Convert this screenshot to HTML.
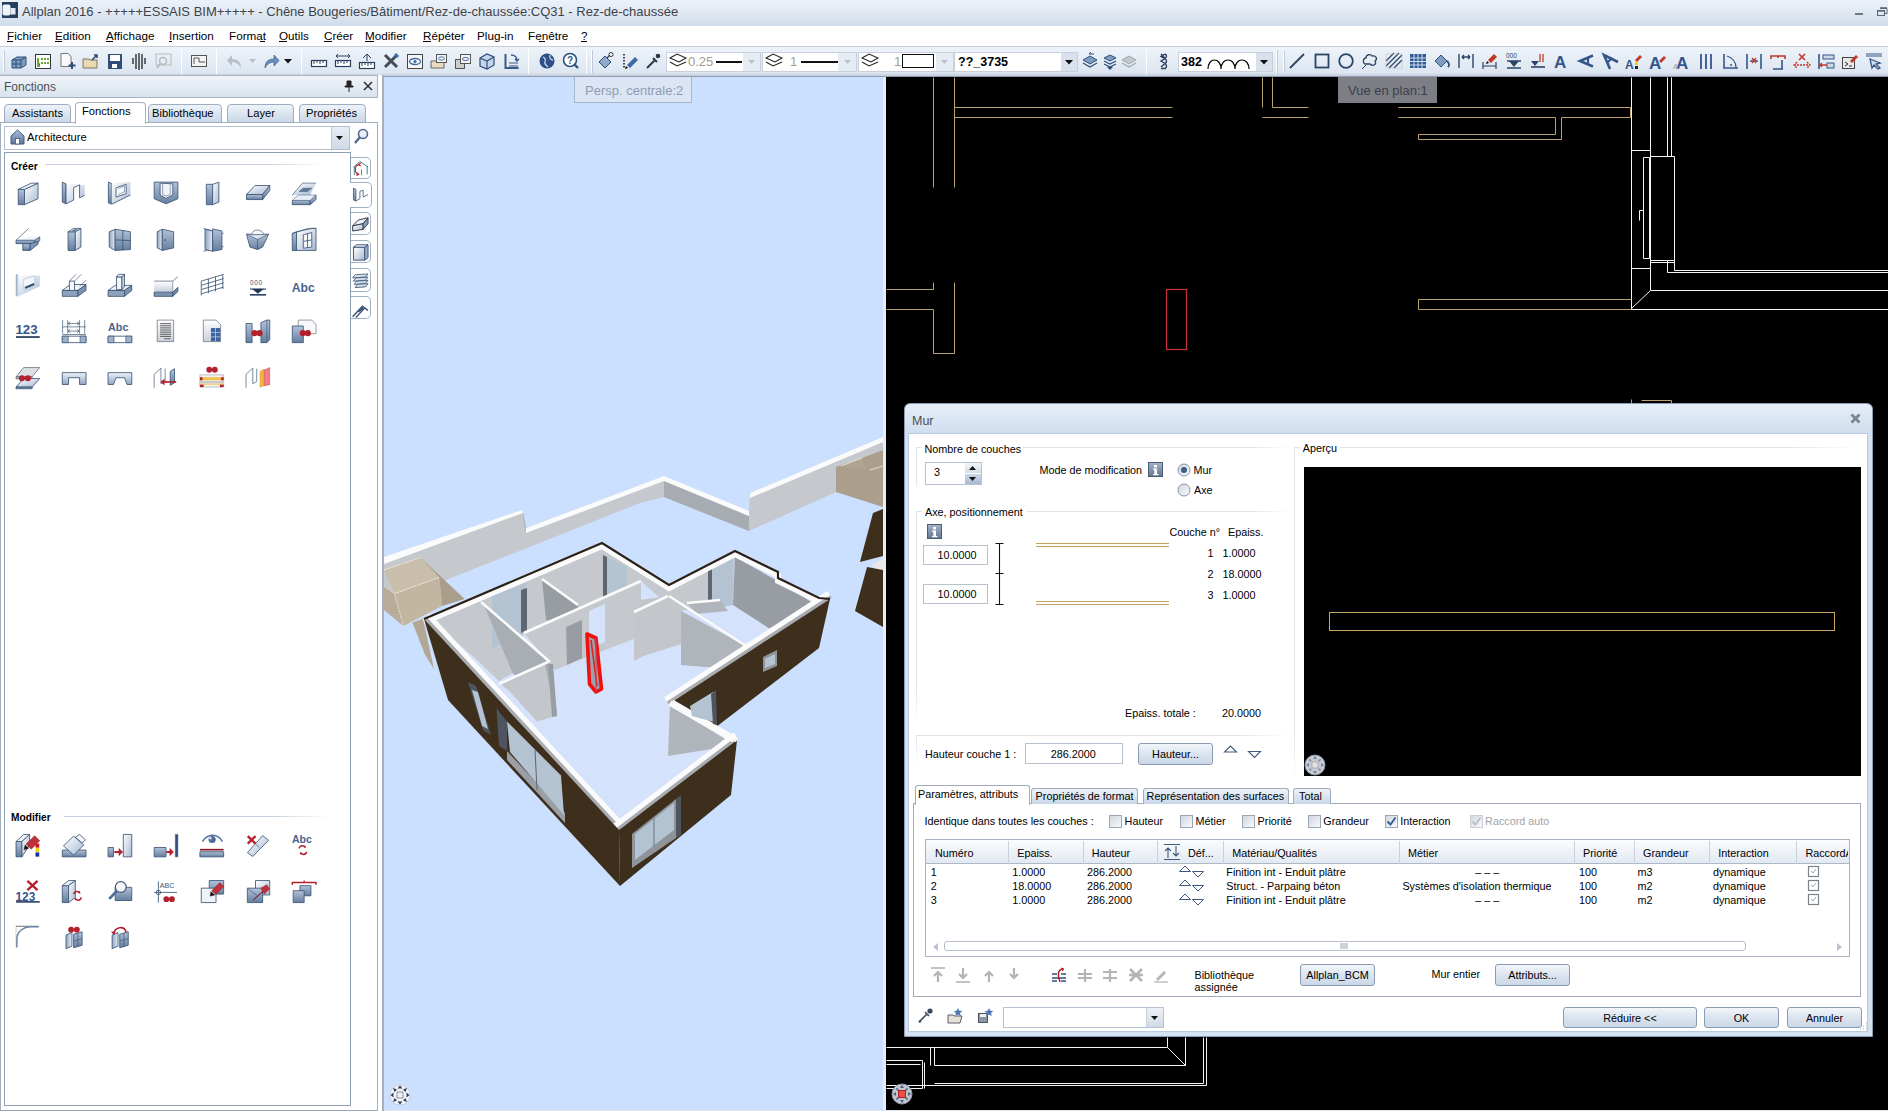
<!DOCTYPE html>
<html><head><meta charset="utf-8">
<style>
*{box-sizing:border-box;margin:0;padding:0}
html,body{width:1888px;height:1111px;overflow:hidden;background:#e3eaf3;font-family:"Liberation Sans",sans-serif;color:#000}
.a{position:absolute}
.t{position:absolute;white-space:pre;line-height:1}
svg{position:absolute;overflow:visible}

</style></head><body>
<div class="a" style="left:0;top:0;width:1888px;height:26px;background:linear-gradient(#ecf1f9,#e3eaf4 40%,#cfdcea)"></div>
<svg style="left:2px;top:2px" width="17" height="17"><rect x="0" y="0" width="16" height="16" fill="#24405f"/><rect x="0.5" y="2.5" width="8" height="11" rx="2" fill="#eef3fa"/><rect x="8.5" y="6" width="5" height="6.5" fill="#e3ebf6"/></svg>
<div class="t" style="left:22px;top:5px;font-size:13px;color:#3e434a">Allplan 2016 - +++++ESSAIS BIM+++++ - Chêne Bougeries/Bâtiment/Rez-de-chaussée:CQ31 - Rez-de-chaussée</div>
<div class="a" style="left:1855px;top:13px;width:8px;height:2px;background:#6d7885"></div>
<svg style="left:1877px;top:7px" width="11" height="9"><path d="M3 1.5h7v5H8" fill="none" stroke="#5d6876" stroke-width="1"/><path d="M3 1h7" stroke="#5d6876" stroke-width="1.6"/><rect x="0.5" y="3.5" width="7" height="5" fill="none" stroke="#5d6876"/><path d="M0.5 4h7" stroke="#5d6876" stroke-width="1.4"/></svg>
<div class="a" style="left:0;top:26px;width:1888px;height:21px;background:#fff;border-bottom:1px solid #c7ccd2"></div>
<div class="t" style="left:7px;top:30px;font-size:11.7px;color:#000">Fichier</div>
<div class="a" style="left:7px;top:41px;width:6px;height:1px;background:#000"></div>
<div class="t" style="left:55px;top:30px;font-size:11.7px;color:#000">Edition</div>
<div class="a" style="left:55px;top:41px;width:7px;height:1px;background:#000"></div>
<div class="t" style="left:106px;top:30px;font-size:11.7px;color:#000">Affichage</div>
<div class="a" style="left:106px;top:41px;width:7px;height:1px;background:#000"></div>
<div class="t" style="left:169px;top:30px;font-size:11.7px;color:#000">Insertion</div>
<div class="a" style="left:169px;top:41px;width:3px;height:1px;background:#000"></div>
<div class="t" style="left:229px;top:30px;font-size:11.7px;color:#000">Format</div>
<div class="a" style="left:260px;top:41px;width:5px;height:1px;background:#000"></div>
<div class="t" style="left:279px;top:30px;font-size:11.7px;color:#000">Outils</div>
<div class="a" style="left:279px;top:41px;width:8px;height:1px;background:#000"></div>
<div class="t" style="left:324px;top:30px;font-size:11.7px;color:#000">Créer</div>
<div class="a" style="left:324px;top:41px;width:8px;height:1px;background:#000"></div>
<div class="t" style="left:365px;top:30px;font-size:11.7px;color:#000">Modifier</div>
<div class="a" style="left:365px;top:41px;width:9px;height:1px;background:#000"></div>
<div class="t" style="left:423px;top:30px;font-size:11.7px;color:#000">Répéter</div>
<div class="a" style="left:423px;top:41px;width:8px;height:1px;background:#000"></div>
<div class="t" style="left:477px;top:30px;font-size:11.7px;color:#000">Plug-in</div>
<div class="t" style="left:528px;top:30px;font-size:11.7px;color:#000">Fenêtre</div>
<div class="a" style="left:539px;top:41px;width:6px;height:1px;background:#000"></div>
<div class="t" style="left:581px;top:30px;font-size:11.7px;color:#000">?</div>
<div class="a" style="left:581px;top:41px;width:6px;height:1px;background:#000"></div>
<div class="a" style="left:0;top:47px;width:1888px;height:30px;background:linear-gradient(#eef3f9,#dde6f1 88%,#c5cfdb);border-bottom:1px solid #8f9cb0"></div>
<div class="a" style="left:181px;top:49px;width:1px;height:25px;background:#b9c4d1;border-right:1px solid #fff"></div>
<div class="a" style="left:216px;top:49px;width:1px;height:25px;background:#b9c4d1;border-right:1px solid #fff"></div>
<div class="a" style="left:301px;top:49px;width:1px;height:25px;background:#b9c4d1;border-right:1px solid #fff"></div>
<div class="a" style="left:528px;top:49px;width:1px;height:25px;background:#b9c4d1;border-right:1px solid #fff"></div>
<div class="a" style="left:586px;top:49px;width:1px;height:25px;background:#b9c4d1;border-right:1px solid #fff"></div>
<div class="a" style="left:1146px;top:49px;width:1px;height:25px;background:#b9c4d1;border-right:1px solid #fff"></div>
<div class="a" style="left:3px;top:50px;width:2px;height:23px;background:#c0c9d4;border-left:1px solid #fff"></div>
<div class="a" style="left:591px;top:50px;width:2px;height:23px;background:#c0c9d4;border-left:1px solid #fff"></div>
<div class="a" style="left:1276px;top:50px;width:2px;height:23px;background:#c0c9d4;border-left:1px solid #fff"></div>
<div class="a" style="left:1283px;top:50px;width:2px;height:23px;background:#c0c9d4;border-left:1px solid #fff"></div>
<svg style="left:10px;top:52px" width="18" height="18" viewBox="0 0 18 18"><path d="M2 8 L7 5 L16 5 L16 13 L11 16 L2 16Z" fill="#7f9cc0" stroke="#2f4f7a"/><path d="M2 8 L11 8 L16 5 M11 8 L11 16 M2 12 L11 12 M6 8 L6 16" stroke="#2f4f7a" fill="none"/></svg>
<svg style="left:34px;top:52px" width="18" height="18" viewBox="0 0 18 18"><rect x="1.5" y="2.5" width="15" height="14" fill="#fff" stroke="#333"/><path d="M4 6v8h2 M7 7h2 M10 7h2 M13 7h2 M7 11h2 M10 11h2 M13 11h2" stroke="#6a3" stroke-width="2"/></svg>
<svg style="left:58px;top:52px" width="18" height="18" viewBox="0 0 18 18"><path d="M3 1.5h7l3 3v10H3Z" fill="#fafafa" stroke="#777"/><path d="M14 10v7 M10.5 13.5h7" stroke="#2f4f7a" stroke-width="2"/></svg>
<svg style="left:82px;top:52px" width="18" height="18" viewBox="0 0 18 18"><path d="M1 7h6l1 1h7v8H1Z" fill="#e9d9b0" stroke="#776"/><path d="M10 8 L15 3 M12 3h3v3" stroke="#2f4f7a" stroke-width="1.6" fill="none"/></svg>
<svg style="left:106px;top:52px" width="18" height="18" viewBox="0 0 18 18"><rect x="2" y="2" width="14" height="15" fill="#2f4f7a"/><rect x="4" y="3" width="10" height="6" fill="#fff"/><rect x="6" y="12" width="5" height="4" fill="#fff"/></svg>
<svg style="left:130px;top:52px" width="18" height="18" viewBox="0 0 18 18"><path d="M3 6v6 M6 2v15 M9 1v17 M12 2v15 M15 6v6" stroke="#222" stroke-width="1.3"/></svg>
<svg style="left:154px;top:52px" width="18" height="18" viewBox="0 0 18 18"><rect x="2" y="2" width="15" height="11" fill="none" stroke="#bbb"/><circle cx="9" cy="9" r="3.5" fill="none" stroke="#bbb" stroke-width="1.5"/><path d="M6 12 L3 16" stroke="#bbb" stroke-width="2"/></svg>
<svg style="left:190px;top:52px" width="18" height="18" viewBox="0 0 18 18"><rect x="1.5" y="3.5" width="15" height="11" fill="#f4f4f4" stroke="#555"/><path d="M4 12V6h5v4h6" fill="none" stroke="#555"/></svg>
<svg style="left:226px;top:52px" width="18" height="18" viewBox="0 0 18 18"><path d="M15 16 C15 9 11 7 6 7 V3 L1 8.5 L6 14 V10 C10 10 13 12 15 16Z" fill="#b9c0c8"/></svg>
<svg style="left:262px;top:52px" width="18" height="18" viewBox="0 0 18 18"><path d="M3 16 C3 9 7 7 12 7 V3 L17 8.5 L12 14 V10 C8 10 5 12 3 16Z" fill="#6b8fc2" stroke="#2f4f7a" stroke-width=".6"/></svg>
<svg style="left:310px;top:52px" width="18" height="18" viewBox="0 0 18 18"><rect x="1.5" y="8.5" width="15" height="6" fill="#fff" stroke="#2b3f5c" stroke-width="1.2"/><path d="M4 9v3 M7 9v2 M10 9v3 M13 9v2" stroke="#2b3f5c"/></svg>
<svg style="left:334px;top:52px" width="18" height="18" viewBox="0 0 18 18"><rect x="1.5" y="8.5" width="15" height="6" fill="#fff" stroke="#2b3f5c" stroke-width="1.2"/><path d="M4 9v3 M7 9v2 M10 9v3 M13 9v2 M2 4h14 M4 2l-2 2 2 2 M14 2l2 2-2 2" stroke="#2b3f5c" fill="none"/></svg>
<svg style="left:358px;top:52px" width="18" height="18" viewBox="0 0 18 18"><rect x="1.5" y="10.5" width="15" height="6" fill="#fff" stroke="#2b3f5c" stroke-width="1.2"/><path d="M4 11v3 M7 11v2 M10 11v3 M13 11v2 M9 9V2 M5 6l4-4 4 4" stroke="#2b3f5c" fill="none"/></svg>
<svg style="left:382px;top:52px" width="18" height="18" viewBox="0 0 18 18"><path d="M3 3 L15 15 M15 3 L3 15" stroke="#454c55" stroke-width="3"/><path d="M13 2l3 3" stroke="#3d6fb0" stroke-width="3"/></svg>
<svg style="left:406px;top:52px" width="18" height="18" viewBox="0 0 18 18"><rect x="1.5" y="2.5" width="15" height="14" fill="#f7f7f7" stroke="#444"/><ellipse cx="9" cy="9.5" rx="5.5" ry="3" fill="none" stroke="#3f6aa6" stroke-width="1.3"/><circle cx="9" cy="9.5" r="1.6" fill="#3f6aa6"/></svg>
<svg style="left:430px;top:52px" width="18" height="18" viewBox="0 0 18 18"><path d="M1 9h5l1 1h7v6H1Z" fill="#e9dcc0" stroke="#666"/><rect x="6.5" y="2.5" width="10" height="8" fill="#f4f4f4" stroke="#555"/><ellipse cx="11.5" cy="6.5" rx="3" ry="1.6" fill="none" stroke="#3f6aa6"/></svg>
<svg style="left:454px;top:52px" width="18" height="18" viewBox="0 0 18 18"><rect x="1.5" y="7.5" width="9" height="9" fill="#ccc" stroke="#555"/><rect x="6.5" y="2.5" width="10" height="9" fill="#f4f4f4" stroke="#555"/><ellipse cx="11.5" cy="7" rx="3" ry="1.6" fill="none" stroke="#3f6aa6"/></svg>
<svg style="left:478px;top:52px" width="18" height="18" viewBox="0 0 18 18"><path d="M2 6 L9 2 L16 5 L16 13 L9 17 L2 14Z" fill="#c6d5e8" stroke="#2f4f7a" stroke-width="1.2"/><path d="M2 6 L9 9 L16 5 M9 9 L9 17" fill="none" stroke="#2f4f7a" stroke-width="1.2"/></svg>
<svg style="left:502px;top:52px" width="18" height="18" viewBox="0 0 18 18"><path d="M3.5 2v14h13" fill="none" stroke="#3a5b86" stroke-width="2"/><path d="M7 11h9 M7 14h9" stroke="#3a5b86"/><path d="M9 3 C13 3 15 5 15 9 M13 7l2 2 2-2" fill="none" stroke="#3a5b86" stroke-width="1.3"/></svg>
<svg style="left:538px;top:52px" width="18" height="18" viewBox="0 0 18 18"><circle cx="9" cy="9" r="7.5" fill="#2d5184"/><path d="M5 5c2 1 3 3 2 5s1 3 3 5 M12 3c-1 3 1 5 3 5" stroke="#c8d7ea" stroke-width="1.3" fill="none"/></svg>
<svg style="left:562px;top:52px" width="18" height="18" viewBox="0 0 18 18"><circle cx="8" cy="8" r="6.5" fill="#fff" stroke="#2d5184" stroke-width="1.6"/><text x="5" y="12" font-size="10" font-weight="bold" fill="#2d5184" font-family="Liberation Sans">?</text><path d="M12 12l4 4" stroke="#2d5184" stroke-width="2.4"/></svg>
<svg style="left:597px;top:52px" width="18" height="18" viewBox="0 0 18 18"><path d="M2 10 L8 4 L14 10 L8 16Z" fill="#8fa9cc" stroke="#2f4f7a"/><path d="M10 6 L13 3" stroke="#333" stroke-width="1.3"/><circle cx="14" cy="2.5" r="2" fill="#fff" stroke="#333"/></svg>
<svg style="left:621px;top:52px" width="18" height="18" viewBox="0 0 18 18"><path d="M3 2v14" stroke="#000" stroke-dasharray="1.5 1.5" stroke-width="1.4"/><path d="M6 13 L14 5 L17 8 L9 16Z" fill="#3f6aa6"/><path d="M5 14l2 2-3 1z" fill="#000"/></svg>
<svg style="left:644px;top:52px" width="18" height="18" viewBox="0 0 18 18"><path d="M3 16 L11 8 M9 6l4 4" stroke="#2c3a4a" stroke-width="2"/><circle cx="14" cy="4" r="2.3" fill="#2c3a4a"/></svg>
<svg style="left:1081px;top:52px" width="18" height="18" viewBox="0 0 18 18"><path d="M2 8l7-4 7 4-7 4z" fill="#7f9cc0" stroke="#2f4f7a"/><path d="M2 11l7 4 7-4" fill="none" stroke="#2f4f7a" stroke-width="1.3"/><path d="M13 2h-5l2-2" stroke="#2f4f7a" fill="none"/></svg>
<svg style="left:1101px;top:52px" width="18" height="18" viewBox="0 0 18 18"><path d="M3 6l6-3 6 3-6 3z" fill="#7f9cc0" stroke="#2f4f7a"/><path d="M3 9l6 3 6-3 M3 12l6 3 6-3" fill="none" stroke="#2f4f7a" stroke-width="1.2"/><path d="M6 15h6l-3 3z" fill="#2f4f7a"/></svg>
<svg style="left:1120px;top:52px" width="18" height="18" viewBox="0 0 18 18"><path d="M2 8l7-4 7 4-7 4z" fill="#c3c7cc" stroke="#a2a8af"/><path d="M2 11l7 4 7-4" fill="none" stroke="#a2a8af" stroke-width="1.3"/></svg>
<svg style="left:1156px;top:52px" width="18" height="18" viewBox="0 0 18 18"><path d="M5 2 L9 6.5 C11 8.5 11 10.5 9 11.5 L5 15 M9 2 C11 3 11 5 9 6.5 L5 9 L9 11.5 C11 13 11 15.5 9 16.5 L5 16.5 M9 2 L5 4.5 L9 6.5" fill="none" stroke="#2b3f5c" stroke-width="1.4"/></svg>
<svg style="left:1288px;top:52px" width="18" height="18" viewBox="0 0 18 18"><path d="M2 16 L16 2" stroke="#2b4567" stroke-width="1.8"/></svg>
<svg style="left:1313px;top:52px" width="18" height="18" viewBox="0 0 18 18"><rect x="2.5" y="2.5" width="13" height="13" fill="none" stroke="#2b4567" stroke-width="1.8"/></svg>
<svg style="left:1337px;top:52px" width="18" height="18" viewBox="0 0 18 18"><circle cx="9" cy="9" r="6.8" fill="none" stroke="#2b4567" stroke-width="1.8"/></svg>
<svg style="left:1361px;top:52px" width="18" height="18" viewBox="0 0 18 18"><path d="M5 12 C1 12 2 6 5 6 C5 2 10 2 11 4 C15 3 17 7 14 9 C16 12 12 15 9 12 Z" fill="none" stroke="#2b4567" stroke-width="1.3"/><path d="M1 17l4-4" stroke="#2b4567"/></svg>
<svg style="left:1385px;top:52px" width="18" height="18" viewBox="0 0 18 18"><path d="M1 9l8-8 M1 14l13-13 M4 16l13-13 M9 16l8-8" stroke="#2b4567" stroke-width="1.3"/><rect x="1" y="2" width="16" height="14" fill="none" stroke="#bbb" stroke-width=".5"/></svg>
<svg style="left:1409px;top:52px" width="18" height="18" viewBox="0 0 18 18"><rect x="1" y="2" width="16" height="14" fill="#2f5b98"/><path d="M5 2v14 M9 2v14 M13 2v14 M1 6h16 M1 9.5h16 M1 13h16" stroke="#cfdcef" stroke-width="1"/></svg>
<svg style="left:1433px;top:52px" width="18" height="18" viewBox="0 0 18 18"><path d="M2 9 L8 3 L14 9 L8 15Z" fill="#7f9cc0" stroke="#2f4f7a"/><path d="M14 9c2 2 3 4 1 6" stroke="#2f4f7a" stroke-width="1.8" fill="none"/></svg>
<svg style="left:1457px;top:52px" width="18" height="18" viewBox="0 0 18 18"><path d="M2 2v14 M16 2v14 M5 5h8 M5 5l2-2 M5 5l2 2 M13 5l-2-2 M13 5l-2 2" stroke="#2b4567" stroke-width="1.4" fill="none"/></svg>
<svg style="left:1481px;top:52px" width="18" height="18" viewBox="0 0 18 18"><path d="M2 10v7 M15 10v7 M2 14h13" stroke="#2b4567" stroke-width="1.2"/><path d="M7 8l6-6 3 3-6 6z" fill="#c0392b"/><path d="M6 9l2 2-3 1z" fill="#000"/></svg>
<svg style="left:1505px;top:52px" width="18" height="18" viewBox="0 0 18 18"><text x="1" y="6" font-size="6.5" fill="#2b4567" font-family="Liberation Sans">000</text><path d="M2 9h14 M2 16h14" stroke="#2b4567" stroke-width="1.6"/><path d="M4 9l5 6 5-6z" fill="#2b4567"/></svg>
<svg style="left:1529px;top:52px" width="18" height="18" viewBox="0 0 18 18"><path d="M2 15h14" stroke="#2b4567" stroke-width="1.6"/><path d="M2 9h8l-4 5z" fill="#2b4567"/><path d="M11 2v8 M14 2v8" stroke="#c0392b" stroke-width="1.3"/></svg>
<svg style="left:1553px;top:52px" width="18" height="18" viewBox="0 0 18 18"><text x="1" y="16" font-size="17" font-weight="bold" fill="#34568a" font-family="Liberation Sans">A</text></svg>
<svg style="left:1577px;top:52px" width="18" height="18" viewBox="0 0 18 18"><path d="M16 3.5 L3 9 L16 14.5" fill="none" stroke="#34568a" stroke-width="2.6" stroke-linejoin="miter"/><path d="M11 6v6" stroke="#34568a" stroke-width="2.2"/></svg>
<svg style="left:1601px;top:52px" width="18" height="18" viewBox="0 0 18 18"><path d="M17 10 L3 3 L9 17" fill="none" stroke="#34568a" stroke-width="2.6"/><path d="M11 6 L6 11" stroke="#34568a" stroke-width="2.2"/></svg>
<svg style="left:1625px;top:52px" width="18" height="18" viewBox="0 0 18 18"><text x="0" y="17" font-size="12" font-weight="bold" fill="#34568a" font-family="Liberation Sans">A</text><rect x="10" y="10" width="3" height="3" fill="#fc0"/><rect x="10" y="14" width="3" height="3" fill="#222"/><path d="M10 8l5-5 2 2-5 5z" fill="#c0392b"/></svg>
<svg style="left:1649px;top:52px" width="18" height="18" viewBox="0 0 18 18"><text x="0" y="17" font-size="17" font-weight="bold" fill="#34568a" font-family="Liberation Sans">A</text><path d="M10 9l5-5 2 2-5 5z" fill="#c0392b"/></svg>
<svg style="left:1673px;top:52px" width="18" height="18" viewBox="0 0 18 18"><text x="3" y="17" font-size="17" font-weight="bold" fill="#34568a" font-family="Liberation Sans">A</text><text x="0" y="17" font-size="8" fill="#999" font-family="Liberation Sans">A</text></svg>
<svg style="left:1697px;top:52px" width="18" height="18" viewBox="0 0 18 18"><path d="M4 2v15 M9 2v15 M14 2v15" stroke="#34568a" stroke-width="1.8"/></svg>
<svg style="left:1721px;top:52px" width="18" height="18" viewBox="0 0 18 18"><path d="M3 2v14h14" stroke="#34568a" stroke-width="1.6" fill="none"/><path d="M6 4 C12 6 15 10 15 16" fill="none" stroke="#34568a" stroke-width="1.2"/><circle cx="10" cy="13" r="1" fill="#34568a"/></svg>
<svg style="left:1745px;top:52px" width="18" height="18" viewBox="0 0 18 18"><path d="M2 2v15 M16 2v15 M5 9h8" stroke="#34568a" stroke-width="1.6"/><path d="M7 6l4 5 M11 6l-4 5" stroke="#c0392b" stroke-width="1.4"/></svg>
<svg style="left:1769px;top:52px" width="18" height="18" viewBox="0 0 18 18"><path d="M2 7V4h14v3 M9 4v2" stroke="#c0392b" stroke-width="1.6" fill="none"/><path d="M4 17h10 M13 8v9" stroke="#34568a" stroke-width="1.6"/></svg>
<svg style="left:1793px;top:52px" width="18" height="18" viewBox="0 0 18 18"><path d="M6 2l6 6 M12 2l-6 6" stroke="#c0392b" stroke-width="1.6"/><path d="M1 13h16 M4 10l-3 3 3 3 M14 10l3 3-3 3" stroke="#c0392b" stroke-width="1.4" fill="none" stroke-dasharray="2 1"/></svg>
<svg style="left:1817px;top:52px" width="18" height="18" viewBox="0 0 18 18"><path d="M2 2v15" stroke="#34568a" stroke-width="1.6"/><rect x="6" y="3" width="11" height="4" fill="#cdd8e6" stroke="#34568a"/><rect x="10" y="11" width="7" height="5" fill="#cdd8e6" stroke="#34568a"/><path d="M3 13h7 M5 11l-2 2 2 2" stroke="#c0392b" stroke-width="1.3" fill="none"/></svg>
<svg style="left:1841px;top:52px" width="18" height="18" viewBox="0 0 18 18"><rect x="1.5" y="5.5" width="12" height="11" fill="#e8e8e8" stroke="#444"/><path d="M4 10l3 2-3 2 M8 14h3" stroke="#333" fill="none"/><path d="M9 9l6-6 2 2-6 6z" fill="#c0392b"/></svg>
<svg style="left:1865px;top:52px" width="18" height="18" viewBox="0 0 18 18"><path d="M1 2h16 M1 4h16" stroke="#34568a"/><path d="M5 7 L15 11 L11 12 L15 16 L13 17 L9 13 L7 16Z" fill="#cfdcee" stroke="#34568a" stroke-width="1.3"/></svg>
<svg style="left:249px;top:59px" width="8" height="5"><path d="M0 0h7l-3.5 4z" fill="#b9c0c8"/></svg>
<svg style="left:284px;top:59px" width="8" height="5"><path d="M0 0h8l-4 4.5z" fill="#111"/></svg>
<div class="a" style="left:666px;top:52px;width:95px;height:20px;background:#e6ecf3;border:1px solid #c7d0db"></div>
<div class="a" style="left:667px;top:53px;width:76px;height:18px;background:#fff"></div>
<svg style="left:669px;top:52px" width="18" height="18" viewBox="0 0 18 18"><path d="M1 6l7-4 9 4-7 4z M1 10l7 4 9-4" fill="none" stroke="#222" stroke-width="1.1"/></svg><div class="t" style="left:688px;top:55px;font-size:13px;color:#a39c8c">0.25</div><div class="a" style="left:716px;top:61px;width:26px;height:1.5px;background:#111"></div>
<svg style="left:748px;top:60px" width="8" height="5"><path d="M0 0h7l-3.5 4z" fill="#b8c0ca"/></svg>
<div class="a" style="left:762px;top:52px;width:95px;height:20px;background:#e6ecf3;border:1px solid #c7d0db"></div>
<div class="a" style="left:763px;top:53px;width:75px;height:18px;background:#fff"></div>
<svg style="left:765px;top:52px" width="18" height="18" viewBox="0 0 18 18"><path d="M1 6l7-4 9 4-7 4z M1 10l7 4 9-4" fill="none" stroke="#222" stroke-width="1.1"/></svg><div class="t" style="left:790px;top:55px;font-size:13px;color:#a39c8c">1</div><div class="a" style="left:801px;top:61px;width:37px;height:1.5px;background:#111"></div>
<svg style="left:844px;top:60px" width="8" height="5"><path d="M0 0h7l-3.5 4z" fill="#b8c0ca"/></svg>
<div class="a" style="left:858px;top:52px;width:96px;height:20px;background:#e6ecf3;border:1px solid #c7d0db"></div>
<div class="a" style="left:859px;top:53px;width:77px;height:18px;background:#fff"></div>
<svg style="left:861px;top:52px" width="18" height="18" viewBox="0 0 18 18"><path d="M1 6l7-4 9 4-7 4z M1 10l7 4 9-4" fill="none" stroke="#222" stroke-width="1.1"/></svg><div class="t" style="left:894px;top:55px;font-size:13px;color:#a39c8c">1</div><div class="a" style="left:902px;top:54px;width:32px;height:14px;background:#fff;border:1.5px solid #111"></div>
<svg style="left:941px;top:60px" width="8" height="5"><path d="M0 0h7l-3.5 4z" fill="#b8c0ca"/></svg>
<div class="a" style="left:954px;top:52px;width:124px;height:20px;background:#d9e2ec;border:1px solid #c7d0db"></div>
<div class="a" style="left:955px;top:53px;width:106px;height:18px;background:#fff"></div>
<div class="t" style="left:958px;top:56px;font-size:12.5px;font-weight:bold;color:#000">??_3735</div>
<svg style="left:1065px;top:60px" width="9" height="5"><path d="M0 0h8l-4 4.5z" fill="#111"/></svg>
<div class="a" style="left:1178px;top:52px;width:95px;height:20px;background:#d9e2ec;border:1px solid #c7d0db"></div>
<div class="a" style="left:1179px;top:53px;width:77px;height:18px;background:#fff"></div>
<div class="t" style="left:1181px;top:56px;font-size:12.5px;font-weight:bold;color:#000">382</div>
<svg style="left:1207px;top:54px" width="45" height="16"><path d="M1 15 C1 3 14 3 14 15 C14 3 28 3 28 15 C28 3 42 3 42 15" fill="none" stroke="#000" stroke-width="1.2"/></svg>
<svg style="left:1260px;top:60px" width="9" height="5"><path d="M0 0h8l-4 4.5z" fill="#111"/></svg>
<svg width="0" height="0" style="left:0;top:0"><defs>
<linearGradient id="gb" x1="0" y1="0" x2="1" y2="1"><stop offset="0" stop-color="#eef3fa"/><stop offset="1" stop-color="#8ea6c6"/></linearGradient>
<linearGradient id="gd" x1="0" y1="0" x2="0" y2="1"><stop offset="0" stop-color="#a9bdd8"/><stop offset="1" stop-color="#5d7699"/></linearGradient>
<linearGradient id="gl" x1="0" y1="0" x2="1" y2="0"><stop offset="0" stop-color="#fbfcfe"/><stop offset="1" stop-color="#b8c9df"/></linearGradient>
</defs></svg>
<div class="a" style="left:0;top:75px;width:384px;height:1036px;background:#fff"></div>
<div class="a" style="left:0;top:75px;width:378px;height:23px;background:linear-gradient(#f0f4f9,#d9e3ee);border:1px solid #a8b3c0;border-left:0"></div>
<div class="t" style="left:4px;top:81px;font-size:12px;color:#4b525a">Fonctions</div>
<svg style="left:344px;top:80px" width="10" height="12"><path d="M3 1h4v5h2v1H1V6h2z M5 7v5" fill="#222" stroke="#222" stroke-width="1"/></svg>
<svg style="left:363px;top:81px" width="10" height="10"><path d="M1 1l8 8 M9 1l-8 8" stroke="#333" stroke-width="1.6"/></svg>
<div class="a" style="left:382px;top:75px;width:2px;height:1036px;background:#a6b0bc"></div>
<div class="a" style="left:0px;top:122px;width:377.5px;height:989px;border:1px solid #a3afbd;border-bottom-color:#98a4b2;background:#fff"></div>
<div class="a" style="left:4px;top:104px;width:67px;height:19px;background:linear-gradient(#eef3f9,#c9d7e8);border:1px solid #9fadbe;border-radius:4px 4px 0 0"></div>
<div class="t" style="left:12px;top:108px;font-size:11.2px;color:#000">Assistants</div>
<div class="a" style="left:75px;top:102px;width:71px;height:22px;background:#fff;border:1px solid #a3afbd;border-bottom:0;border-radius:4px 4px 0 0"></div>
<div class="t" style="left:82px;top:106px;font-size:11.2px;color:#000">Fonctions</div>
<div class="a" style="left:148px;top:104px;width:74px;height:19px;background:linear-gradient(#eef3f9,#c9d7e8);border:1px solid #9fadbe;border-radius:4px 4px 0 0"></div>
<div class="t" style="left:152px;top:108px;font-size:11.2px;color:#000">Bibliothèque</div>
<div class="a" style="left:227px;top:104px;width:67px;height:19px;background:linear-gradient(#eef3f9,#c9d7e8);border:1px solid #9fadbe;border-radius:4px 4px 0 0"></div>
<div class="t" style="left:247px;top:108px;font-size:11.2px;color:#000">Layer</div>
<div class="a" style="left:299px;top:104px;width:67px;height:19px;background:linear-gradient(#eef3f9,#c9d7e8);border:1px solid #9fadbe;border-radius:4px 4px 0 0"></div>
<div class="t" style="left:306px;top:108px;font-size:11.2px;color:#000">Propriétés</div>
<div class="a" style="left:4px;top:126px;width:346px;height:24px;background:#fff;border:1px solid #b3bfcd"></div>
<div class="a" style="left:331px;top:127px;width:18px;height:22px;background:linear-gradient(#e9eef5,#cfd9e6);border-left:1px solid #c2ccd8"></div>
<svg style="left:336px;top:136px" width="8" height="5"><path d="M0 0h7l-3.5 4z" fill="#111"/></svg>
<svg style="left:10px;top:129px" width="15" height="16"><path d="M1 7L7.5 1 14 7V15H1Z" fill="url(#gd)" stroke="#3d5a80"/><rect x="5.5" y="9.5" width="4" height="5.5" fill="#fff" stroke="#3d5a80" stroke-width=".8"/></svg>
<div class="t" style="left:27px;top:132px;font-size:11.2px;color:#000">Architecture</div>
<svg style="left:353px;top:128px" width="16" height="18"><circle cx="10" cy="6" r="4.5" fill="#e9eef5" stroke="#4d6a90" stroke-width="1.6"/><path d="M7 9L2 15" stroke="#4d6a90" stroke-width="2.4"/></svg>
<div class="a" style="left:4px;top:152px;width:347px;height:954px;background:#fff;border:1px solid #8e9fb3"></div>
<div class="t" style="left:11px;top:162px;font-size:10.2px;font-weight:bold;color:#000">Créer</div>
<div class="a" style="left:45px;top:164px;width:280px;height:1px;background:linear-gradient(90deg,#c9d3df,#c9d3df 80%,#fff)"></div>
<div class="t" style="left:11px;top:813px;font-size:10.2px;font-weight:bold;color:#000">Modifier</div>
<div class="a" style="left:64px;top:816px;width:265px;height:1px;background:linear-gradient(90deg,#c9d3df,#c9d3df 80%,#fff)"></div>
<div class="a" style="left:351px;top:156.5px;width:19.5px;height:22.5px;background:#fff;border:1px solid #9fb0c4;border-left:0;border-radius:0 5px 5px 0"></div>
<div class="a" style="left:350px;top:182px;width:22px;height:26px;background:#fff;border:1px solid #9fb0c4;border-left:0;border-radius:0 5px 5px 0"></div>
<div class="a" style="left:351px;top:211.5px;width:19.5px;height:23.5px;background:#fff;border:1px solid #9fb0c4;border-left:0;border-radius:0 5px 5px 0"></div>
<div class="a" style="left:351px;top:240px;width:19.5px;height:23px;background:#fff;border:1px solid #9fb0c4;border-left:0;border-radius:0 5px 5px 0"></div>
<div class="a" style="left:351px;top:268px;width:19.5px;height:23.5px;background:#fff;border:1px solid #9fb0c4;border-left:0;border-radius:0 5px 5px 0"></div>
<div class="a" style="left:351px;top:296px;width:19.5px;height:23px;background:#fff;border:1px solid #9fb0c4;border-left:0;border-radius:0 5px 5px 0"></div>
<svg style="left:330px;top:150px" width="50" height="180" viewBox="0 0 309 1111"><path d="M145 105 L185 70 L235 105 M150 100 V155 M230 100 V150 M195 120 V155" fill="none" stroke="#3a8a8a" stroke-width="6"/><path d="M175 90 C150 100 150 140 175 150 M165 140 l12 10 -14 6 M190 80 l-15 10 15 8" fill="none" stroke="#b3202d" stroke-width="7"/><polygon points="145,235 160,242 160,315 145,308" fill="url(#zd)" stroke="#3d5576" stroke-width="5"/><polyline points="160,315 185,300 185,255 205,248 205,290 235,275" fill="none" stroke="#3d5576" stroke-width="5"/><polygon points="140,468 175,432 235,418 205,455" fill="#eef2f7" stroke="#333b46" stroke-width="6"/><polygon points="140,468 205,455 205,490 140,500" fill="url(#zl)" stroke="#333b46" stroke-width="6"/><polygon points="205,455 235,418 235,455 205,490" fill="#8fa3bf" stroke="#333b46" stroke-width="6"/><polygon points="145,600 215,600 215,680 145,680" fill="url(#zl)" stroke="#3d5576" stroke-width="6"/><polygon points="145,600 165,585 235,585 215,600" fill="#eef2f7" stroke="#3d5576" stroke-width="6"/><polygon points="215,600 235,585 235,665 215,680" fill="#9fb1c9" stroke="#3d5576" stroke-width="6"/><polygon points="140,790 155,770 235,765 220,785" fill="url(#zl)" stroke="#3d5576" stroke-width="5"/><polygon points="145,810 160,790 235,785 220,805" fill="url(#zl)" stroke="#3d5576" stroke-width="5"/><polygon points="150,830 165,810 235,805 220,825" fill="url(#zl)" stroke="#3d5576" stroke-width="5"/><polygon points="155,850 170,830 235,825 220,845" fill="url(#zl)" stroke="#3d5576" stroke-width="5"/><path d="M140 1030 L200 965 L235 990 M160 1035 L215 975 M175 1000 L205 975" fill="none" stroke="#3d5576" stroke-width="9"/></svg>
<svg style="left:5px;top:175px" width="320" height="80" viewBox="0 0 1888 472"><defs><linearGradient id="zd" x1="0" y1="0" x2="0" y2="1"><stop offset="0" stop-color="#b3c3d9"/><stop offset="1" stop-color="#647d9f"/></linearGradient><linearGradient id="zl" x1="0" y1="0" x2="1" y2="1"><stop offset="0" stop-color="#ffffff"/><stop offset="1" stop-color="#a7bad3"/></linearGradient><linearGradient id="zh" x1="0" y1="0" x2="1" y2="0"><stop offset="0" stop-color="#8ea3c0"/><stop offset="1" stop-color="#e9eef6"/></linearGradient></defs><polygon points="78,85 115,85 115,175 78,175" fill="url(#zd)" stroke="#3d5576" stroke-width="5" stroke-linejoin="round"/><polygon points="115,85 195,48 195,140 115,175" fill="url(#zl)" stroke="#3d5576" stroke-width="5" stroke-linejoin="round"/><polygon points="78,85 155,48 195,48 115,85" fill="#eef2f8" stroke="#3d5576" stroke-width="5" stroke-linejoin="round"/><polygon points="338,42 360,52 360,170 338,160" fill="url(#zd)" stroke="#3d5576" stroke-width="5" stroke-linejoin="round"/><polygon points="360,170 405,148 405,75 440,58 440,135 470,120 470,60 360,52" fill="url(#zl)" stroke="none" stroke-width="5" stroke-linejoin="round"/><polyline points="360,52 360,170 405,148 405,75 440,58 440,135 470,120" fill="none" stroke="#3d5576" stroke-width="5" stroke-linejoin="round"/><polygon points="610,42 630,50 630,172 610,165" fill="url(#zd)" stroke="#3d5576" stroke-width="5" stroke-linejoin="round"/><polygon points="630,172 740,120 740,40 630,50" fill="url(#zl)" stroke="none" stroke-width="5" stroke-linejoin="round"/><polyline points="630,172 740,118" fill="none" stroke="#3d5576" stroke-width="5" stroke-linejoin="round"/><polygon points="655,75 715,55 715,110 655,130" fill="#f6f8fb" stroke="#3d5576" stroke-width="5" stroke-linejoin="round"/><polyline points="668,80 705,65 705,100 668,115" fill="none" stroke="#3d5576" stroke-width="3" stroke-linejoin="round"/><polygon points="880,42 1020,42 1020,140 950,170 880,140" fill="url(#zd)" stroke="#3d5576" stroke-width="5" stroke-linejoin="round"/><polygon points="915,48 990,52 990,118 950,138 915,118" fill="#f1f4f9" stroke="#3d5576" stroke-width="5" stroke-linejoin="round"/><polyline points="930,52 930,115 950,125 975,115 975,55" fill="none" stroke="#3d5576" stroke-width="3" stroke-linejoin="round"/><polygon points="1188,55 1225,55 1225,175 1188,175" fill="url(#zd)" stroke="#3d5576" stroke-width="5" stroke-linejoin="round"/><polygon points="1225,55 1262,42 1262,160 1225,175" fill="url(#zl)" stroke="#3d5576" stroke-width="5" stroke-linejoin="round"/><polygon points="1425,115 1475,62 1562,62 1520,115" fill="url(#zl)" stroke="#3d5576" stroke-width="5" stroke-linejoin="round"/><polygon points="1425,115 1520,115 1520,145 1425,145" fill="url(#zd)" stroke="#3d5576" stroke-width="5" stroke-linejoin="round"/><polygon points="1520,115 1562,62 1562,92 1520,145" fill="url(#zd)" stroke="#3d5576" stroke-width="5" stroke-linejoin="round"/><polygon points="1695,118 1755,50 1835,50 1800,118" fill="url(#zl)" stroke="none" stroke-width="5" stroke-linejoin="round"/><polyline points="1695,118 1755,48 1835,48" fill="none" stroke="#3d5576" stroke-width="4" stroke-linejoin="round"/><polygon points="1735,98 1760,78 1810,78 1785,98" fill="#5d7699" stroke="#3d5576" stroke-width="3" stroke-linejoin="round"/><polygon points="1695,150 1800,150 1800,175 1695,175" fill="url(#zd)" stroke="#3d5576" stroke-width="5" stroke-linejoin="round"/><polygon points="1800,150 1835,118 1835,145 1800,175" fill="url(#zd)" stroke="#3d5576" stroke-width="5" stroke-linejoin="round"/><polygon points="1695,150 1730,118 1835,118 1800,150" fill="#e9eef6" stroke="#3d5576" stroke-width="3" stroke-linejoin="round"/><polyline points="65,385 140,315" fill="none" stroke="#3d5576" stroke-width="4" stroke-linejoin="round"/><polygon points="65,385 175,385 205,365 140,365" fill="#f0f3f8" stroke="none" stroke-width="5" stroke-linejoin="round"/><polygon points="65,385 175,385 175,405 65,405" fill="url(#zd)" stroke="#3d5576" stroke-width="5" stroke-linejoin="round"/><polygon points="175,385 205,365 205,388 175,405" fill="url(#zd)" stroke="#3d5576" stroke-width="5" stroke-linejoin="round"/><polygon points="105,405 148,405 148,445 105,445" fill="url(#zd)" stroke="#3d5576" stroke-width="5" stroke-linejoin="round"/><polygon points="148,405 195,392 195,408 148,445" fill="#7f96b5" stroke="#3d5576" stroke-width="5" stroke-linejoin="round"/><polygon points="372,335 415,335 415,445 372,445" fill="url(#zd)" stroke="#3d5576" stroke-width="5" stroke-linejoin="round"/><polygon points="415,335 448,315 448,425 415,445" fill="url(#zl)" stroke="#3d5576" stroke-width="5" stroke-linejoin="round"/><polygon points="372,335 405,315 448,315 415,335" fill="#f2f5f9" stroke="#3d5576" stroke-width="5" stroke-linejoin="round"/><polygon points="395,330 410,322 428,322 413,330" fill="#5d7699" stroke="#3d5576" stroke-width="2" stroke-linejoin="round"/><polygon points="615,335 650,320 650,445 615,425" fill="url(#zh)" stroke="#3d5576" stroke-width="5" stroke-linejoin="round"/><polygon points="650,320 740,335 740,440 650,445" fill="url(#zd)" stroke="#3d5576" stroke-width="5" stroke-linejoin="round"/><polyline points="695,328 695,443" fill="none" stroke="#3d5576" stroke-width="5" stroke-linejoin="round"/><polyline points="650,383 740,387" fill="none" stroke="#3d5576" stroke-width="5" stroke-linejoin="round"/><polygon points="898,335 928,320 928,445 898,430" fill="url(#zh)" stroke="#3d5576" stroke-width="5" stroke-linejoin="round"/><polygon points="928,320 995,335 995,430 928,445" fill="url(#zd)" stroke="#3d5576" stroke-width="5" stroke-linejoin="round"/><rect x="940" y="380" width="8" height="8" fill="#2d3f5a"/><polyline points="1170,315 1290,345" fill="none" stroke="#3d5576" stroke-width="4" stroke-linejoin="round"/><polyline points="1170,450 1290,422" fill="none" stroke="#3d5576" stroke-width="4" stroke-linejoin="round"/><polygon points="1180,320 1225,330 1225,450 1180,440" fill="url(#zh)" stroke="#3d5576" stroke-width="5" stroke-linejoin="round"/><polygon points="1225,318 1280,330 1280,440 1225,450" fill="url(#zd)" stroke="#3d5576" stroke-width="5" stroke-linejoin="round"/><polygon points="1425,350 1555,350 1520,425 1490,440 1445,425" fill="url(#zd)" stroke="#3d5576" stroke-width="5" stroke-linejoin="round"/><polygon points="1425,350 1490,380 1555,350" fill="#dfe6f0" stroke="#3d5576" stroke-width="4" stroke-linejoin="round"/><polyline points="1490,380 1490,440" fill="none" stroke="#3d5576" stroke-width="4" stroke-linejoin="round"/><path d="M1455 352 C1460 315 1520 315 1525 352 Z" fill="#f4f6fa" stroke="#3d5576" stroke-width="4"/><polygon points="1695,345 1720,335 1720,445 1695,445" fill="url(#zd)" stroke="#3d5576" stroke-width="5" stroke-linejoin="round"/><polygon points="1720,335 1810,315 1835,315 1835,445 1720,445" fill="url(#zl)" stroke="#3d5576" stroke-width="5" stroke-linejoin="round"/><polyline points="1695,345 1790,315 1835,315" fill="none" stroke="#3d5576" stroke-width="4" stroke-linejoin="round"/><polygon points="1760,352 1810,340 1810,425 1760,432" fill="#f5f7fa" stroke="#3d5576" stroke-width="5" stroke-linejoin="round"/><polyline points="1785,346 1785,428" fill="none" stroke="#3d5576" stroke-width="5" stroke-linejoin="round"/><polyline points="1760,392 1810,383" fill="none" stroke="#3d5576" stroke-width="5" stroke-linejoin="round"/></svg>
<svg style="left:5px;top:265px" width="320" height="130" viewBox="0 0 1888 767"><defs><linearGradient id="zv" x1="0" y1="0" x2="0" y2="1"><stop offset="0" stop-color="#ffffff"/><stop offset="1" stop-color="#c8cfd8"/></linearGradient><linearGradient id="zv2" x1="0" y1="0" x2="0" y2="1"><stop offset="0" stop-color="#eef3f9"/><stop offset="1" stop-color="#8fa6c4"/></linearGradient></defs><polygon points="65,55 80,62 80,185 65,180" fill="url(#zh)" stroke="#9fb1c9" stroke-width="3" stroke-linejoin="round"/><polygon points="80,185 205,125 205,62 80,62" fill="url(#zl)" stroke="none" stroke-width="5" stroke-linejoin="round"/><polygon points="110,85 175,65 175,120 110,145" fill="#f3f6fa" stroke="#aab8cc" stroke-width="3" stroke-linejoin="round"/><polyline points="118,135 172,112" fill="none" stroke="#2f4a70" stroke-width="12" stroke-linejoin="round"/><polygon points="338,150 385,115 478,115 430,150" fill="#eef2f7" stroke="#3d5576" stroke-width="5" stroke-linejoin="round"/><polygon points="338,150 430,150 430,185 338,185" fill="#8ea2bd" stroke="#3d5576" stroke-width="5" stroke-linejoin="round"/><polygon points="430,150 478,115 478,150 430,185" fill="#7b91b0" stroke="#3d5576" stroke-width="5" stroke-linejoin="round"/><polygon points="380,95 410,95 410,150 380,150" fill="#f5f7fa" stroke="#3d5576" stroke-width="5" stroke-linejoin="round"/><polyline points="380,95 420,55" fill="none" stroke="#3d5576" stroke-width="4" stroke-linejoin="round"/><polyline points="410,95 450,55" fill="none" stroke="#3d5576" stroke-width="4" stroke-linejoin="round"/><polyline points="440,125 478,90" fill="none" stroke="#3d5576" stroke-width="4" stroke-linejoin="round"/><polygon points="608,150 650,120 748,120 705,150" fill="#eef2f7" stroke="#3d5576" stroke-width="5" stroke-linejoin="round"/><polygon points="608,150 705,150 705,185 608,185" fill="#8ea2bd" stroke="#3d5576" stroke-width="5" stroke-linejoin="round"/><polygon points="705,150 748,120 748,150 705,185" fill="#7b91b0" stroke="#3d5576" stroke-width="5" stroke-linejoin="round"/><polygon points="658,70 690,70 690,145 658,145" fill="#f5f7fa" stroke="#3d5576" stroke-width="5" stroke-linejoin="round"/><polygon points="658,70 670,55 705,55 690,70" fill="#f5f7fa" stroke="#3d5576" stroke-width="5" stroke-linejoin="round"/><polygon points="690,70 705,55 705,130 690,145" fill="#c9d4e3" stroke="#3d5576" stroke-width="5" stroke-linejoin="round"/><polygon points="880,95 990,95 990,158 880,158" fill="url(#zv)" stroke="none" stroke-width="5" stroke-linejoin="round"/><polyline points="880,95 990,95 1020,68" fill="none" stroke="#3d5576" stroke-width="4" stroke-linejoin="round"/><polyline points="990,95 990,158" fill="none" stroke="#3d5576" stroke-width="3" stroke-linejoin="round"/><polygon points="880,160 990,160 990,185 880,185" fill="#7b91b0" stroke="#3d5576" stroke-width="5" stroke-linejoin="round"/><polygon points="990,160 1020,132 1020,157 990,185" fill="#6d84a5" stroke="#3d5576" stroke-width="5" stroke-linejoin="round"/><polyline points="1158,95 1290,55" fill="none" stroke="#3d5576" stroke-width="5" stroke-linejoin="round"/><polyline points="1158,120 1290,80" fill="none" stroke="#3d5576" stroke-width="5" stroke-linejoin="round"/><polyline points="1158,145 1290,105" fill="none" stroke="#3d5576" stroke-width="5" stroke-linejoin="round"/><polyline points="1158,170 1290,130" fill="none" stroke="#3d5576" stroke-width="5" stroke-linejoin="round"/><polyline points="1158,95 1158,180" fill="none" stroke="#3d5576" stroke-width="5" stroke-linejoin="round"/><polyline points="1200,82 1200,167" fill="none" stroke="#3d5576" stroke-width="5" stroke-linejoin="round"/><polyline points="1242,70 1242,155" fill="none" stroke="#3d5576" stroke-width="5" stroke-linejoin="round"/><polyline points="1285,57 1285,142" fill="none" stroke="#3d5576" stroke-width="5" stroke-linejoin="round"/><text x="1445" y="120" font-size="38" font-weight="normal" fill="#3d5576" font-family="Liberation Sans" letter-spacing="4">000</text><polyline points="1445,142 1540,142" fill="none" stroke="#1f3556" stroke-width="6" stroke-linejoin="round"/><polygon points="1460,142 1525,142 1492,168" fill="#1f3556" stroke="#1f3556" stroke-width="2" stroke-linejoin="round"/><polyline points="1445,176 1540,176" fill="none" stroke="#1f3556" stroke-width="9" stroke-linejoin="round"/><text x="1692" y="158" font-size="72" font-weight="bold" fill="#48648e" font-family="Liberation Sans" >Abc</text><text x="62" y="410" font-size="78" font-weight="bold" fill="#34568a" font-family="Liberation Sans" >123</text><polyline points="65,425 205,425" fill="none" stroke="#1f3556" stroke-width="10" stroke-linejoin="round"/><polyline points="340,325 340,405" fill="none" stroke="#3d5576" stroke-width="4" stroke-linejoin="round"/><polyline points="370,325 370,405" fill="none" stroke="#3d5576" stroke-width="4" stroke-linejoin="round"/><polyline points="440,325 440,405" fill="none" stroke="#3d5576" stroke-width="4" stroke-linejoin="round"/><polyline points="470,325 470,405" fill="none" stroke="#3d5576" stroke-width="4" stroke-linejoin="round"/><polyline points="372,345 438,345" fill="none" stroke="#3d5576" stroke-width="4" stroke-linejoin="round"/><polyline points="385,335 372,345 385,355" fill="none" stroke="#3d5576" stroke-width="4" stroke-linejoin="round"/><polyline points="425,335 438,345 425,355" fill="none" stroke="#3d5576" stroke-width="4" stroke-linejoin="round"/><polyline points="372,390 438,390" fill="none" stroke="#3d5576" stroke-width="4" stroke-linejoin="round"/><polyline points="385,380 372,390 385,400" fill="none" stroke="#3d5576" stroke-width="4" stroke-linejoin="round"/><polyline points="425,380 438,390 425,400" fill="none" stroke="#3d5576" stroke-width="4" stroke-linejoin="round"/><polyline points="338,365 478,365" fill="none" stroke="#3d5576" stroke-width="4" stroke-linejoin="round"/><polyline points="338,410 478,410" fill="none" stroke="#3d5576" stroke-width="4" stroke-linejoin="round"/><polygon points="338,420 478,420 478,458 338,458" fill="#fff" stroke="#3d5576" stroke-width="5" stroke-linejoin="round"/><polygon points="338,420 373,420 373,458 338,458" fill="#9fb1c9" stroke="#3d5576" stroke-width="4" stroke-linejoin="round"/><polygon points="443,420 478,420 478,458 443,458" fill="#9fb1c9" stroke="#3d5576" stroke-width="4" stroke-linejoin="round"/><polygon points="608,420 748,420 748,458 608,458" fill="#fff" stroke="#3d5576" stroke-width="5" stroke-linejoin="round"/><polygon points="608,420 643,420 643,458 608,458" fill="#9fb1c9" stroke="#3d5576" stroke-width="4" stroke-linejoin="round"/><polygon points="713,420 748,420 748,458 713,458" fill="#9fb1c9" stroke="#3d5576" stroke-width="4" stroke-linejoin="round"/><text x="608" y="390" font-size="64" font-weight="bold" fill="#48648e" font-family="Liberation Sans" >Abc</text><polygon points="898,325 995,325 995,452 898,452" fill="url(#zv)" stroke="#5d6675" stroke-width="4" stroke-linejoin="round"/><polyline points="915,345 980,345" fill="none" stroke="#333" stroke-width="4" stroke-linejoin="round"/><polyline points="915,356 980,356" fill="none" stroke="#333" stroke-width="4" stroke-linejoin="round"/><polyline points="915,367 980,367" fill="none" stroke="#333" stroke-width="4" stroke-linejoin="round"/><polyline points="915,378 980,378" fill="none" stroke="#333" stroke-width="4" stroke-linejoin="round"/><polyline points="915,389 980,389" fill="none" stroke="#333" stroke-width="4" stroke-linejoin="round"/><polyline points="915,400 980,400" fill="none" stroke="#333" stroke-width="4" stroke-linejoin="round"/><polyline points="915,411 980,411" fill="none" stroke="#333" stroke-width="4" stroke-linejoin="round"/><polyline points="915,422 980,422" fill="none" stroke="#333" stroke-width="4" stroke-linejoin="round"/><polyline points="940,435 975,435" fill="none" stroke="#333" stroke-width="4" stroke-linejoin="round"/><polygon points="1170,325 1245,325 1272,352 1272,452 1170,452" fill="url(#zv)" stroke="#5d6675" stroke-width="4" stroke-linejoin="round"/><polygon points="1215,372 1270,372 1270,450 1215,450" fill="#3c63a0" stroke="none" stroke-width="5" stroke-linejoin="round"/><polyline points="1242,372 1242,450" fill="none" stroke="#cfdcef" stroke-width="4" stroke-linejoin="round"/><polyline points="1215,398 1270,398" fill="none" stroke="#cfdcef" stroke-width="4" stroke-linejoin="round"/><polyline points="1215,424 1270,424" fill="none" stroke="#cfdcef" stroke-width="4" stroke-linejoin="round"/><polygon points="1422,345 1458,345 1458,458 1422,458" fill="url(#zd)" stroke="#3d5576" stroke-width="5" stroke-linejoin="round"/><polygon points="1510,340 1545,325 1562,325 1562,440 1545,458 1510,458" fill="url(#zd)" stroke="#3d5576" stroke-width="5" stroke-linejoin="round"/><polyline points="1545,325 1545,458" fill="none" stroke="#3d5576" stroke-width="4" stroke-linejoin="round"/><circle cx="1472" cy="402" r="18" fill="#b3202d"/><circle cx="1502" cy="402" r="18" fill="#b3202d"/><polygon points="1730,325 1810,325 1835,350 1835,405 1730,405" fill="#f7f8fa" stroke="#6d7480" stroke-width="4" stroke-linejoin="round"/><polygon points="1695,360 1760,360 1760,458 1695,458" fill="url(#zd)" stroke="#3d5576" stroke-width="5" stroke-linejoin="round"/><circle cx="1757" cy="402" r="18" fill="#b3202d"/><circle cx="1787" cy="402" r="18" fill="#b3202d"/><polygon points="65,660 110,605 205,605 160,660" fill="#dcdfe4" stroke="#555c66" stroke-width="4" stroke-linejoin="round"/><polygon points="65,660 160,660 160,672 65,672" fill="#b9bec6" stroke="#555c66" stroke-width="4" stroke-linejoin="round"/><polygon points="65,720 110,670 205,670 160,720" fill="url(#zl)" stroke="#3d5576" stroke-width="5" stroke-linejoin="round"/><polygon points="65,720 160,720 160,730 65,730" fill="#7b91b0" stroke="#3d5576" stroke-width="5" stroke-linejoin="round"/><circle cx="100" cy="668" r="18" fill="#b3202d"/><circle cx="135" cy="668" r="18" fill="#b3202d"/><polygon points="338,635 478,635 478,705 440,705 440,665 375,665 375,705 338,705" fill="url(#zv2)" stroke="#3d5576" stroke-width="5" stroke-linejoin="round"/><polygon points="608,635 748,635 748,705 720,705 705,665 655,665 640,705 608,705" fill="url(#zv2)" stroke="#3d5576" stroke-width="5" stroke-linejoin="round"/><polyline points="880,725 880,645 920,608 920,700 945,688 945,612" fill="none" stroke="#3d5576" stroke-width="4" stroke-linejoin="round"/><polygon points="975,628 1000,612 1000,695 975,710" fill="url(#zd)" stroke="#3d5576" stroke-width="5" stroke-linejoin="round"/><polyline points="1010,690 925,690" fill="none" stroke="#b3202d" stroke-width="10" stroke-linejoin="round"/><polygon points="940,672 918,690 940,708" fill="#b3202d" stroke="#b3202d" stroke-width="2" stroke-linejoin="round"/><circle cx="1205" cy="618" r="17" fill="#b3202d"/><circle cx="1238" cy="618" r="17" fill="#b3202d"/><polygon points="1150,648 1290,648 1290,720 1150,720" fill="#f2f2f2" stroke="#888" stroke-width="3" stroke-linejoin="round"/><polygon points="1150,662 1290,662 1290,680 1150,680" fill="#f0c24a" stroke="none" stroke-width="5" stroke-linejoin="round"/><polygon points="1150,684 1290,684 1290,698 1150,698" fill="#c9c9c9" stroke="none" stroke-width="5" stroke-linejoin="round"/><polygon points="1150,700 1290,700 1290,706 1150,706" fill="#f0c24a" stroke="none" stroke-width="5" stroke-linejoin="round"/><polygon points="1150,706 1172,706 1172,720 1150,720" fill="#b3202d" stroke="none" stroke-width="5" stroke-linejoin="round"/><polygon points="1268,706 1290,706 1290,720 1268,720" fill="#b3202d" stroke="none" stroke-width="5" stroke-linejoin="round"/><polygon points="1150,662 1165,662 1165,680 1150,680" fill="#b3202d" stroke="none" stroke-width="5" stroke-linejoin="round"/><polygon points="1275,662 1290,662 1290,680 1275,680" fill="#b3202d" stroke="none" stroke-width="5" stroke-linejoin="round"/><polyline points="1422,725 1422,645 1462,608 1462,700 1485,688 1485,612" fill="none" stroke="#3d5576" stroke-width="4" stroke-linejoin="round"/><polygon points="1505,628 1530,614 1530,712 1505,720" fill="#f5b53a" stroke="#e08a1a" stroke-width="3" stroke-linejoin="round"/><polygon points="1530,620 1562,605 1562,706 1530,712" fill="#f07f88" stroke="#c9404c" stroke-width="3" stroke-linejoin="round"/></svg>
<svg style="left:5px;top:828px" width="320" height="130" viewBox="0 0 1888 767"><polygon points="65,80 100,80 100,170 65,170" fill="url(#zd)" stroke="#3d5576" stroke-width="5" stroke-linejoin="round"/><polygon points="65,80 110,38 145,38 100,80" fill="#eef2f7" stroke="#3d5576" stroke-width="5" stroke-linejoin="round"/><polygon points="100,80 145,38 145,100 100,170" fill="url(#zl)" stroke="#3d5576" stroke-width="5" stroke-linejoin="round"/><polygon points="125,95 175,45 205,75 155,125" fill="#c0303a" stroke="#8c1a22" stroke-width="3" stroke-linejoin="round"/><polygon points="118,100 140,120 112,128" fill="#111" stroke="#111" stroke-width="2" stroke-linejoin="round"/><rect x="180" y="92" width="22" height="24" fill="#d01818"/><rect x="180" y="118" width="22" height="24" fill="#f2d20a"/><rect x="180" y="144" width="22" height="25" fill="#1a2fb0"/><polygon points="338,130 478,130 478,170 338,170" fill="url(#zd)" stroke="#3d5576" stroke-width="5" stroke-linejoin="round"/><polygon points="345,105 405,48 465,100 405,160" fill="url(#zl)" stroke="#3d5576" stroke-width="5" stroke-linejoin="round"/><polygon points="415,55 440,38 475,70 455,88" fill="#f4f6fa" stroke="#3d5576" stroke-width="5" stroke-linejoin="round"/><polygon points="608,115 640,115 640,170 608,170" fill="url(#zd)" stroke="#3d5576" stroke-width="5" stroke-linejoin="round"/><polyline points="645,142 680,142" fill="none" stroke="#b3202d" stroke-width="12" stroke-linejoin="round"/><polygon points="672,120 695,142 672,164" fill="#b3202d" stroke="#b3202d" stroke-width="2" stroke-linejoin="round"/><polygon points="698,38 748,38 748,170 698,170" fill="url(#zl)" stroke="#3d5576" stroke-width="5" stroke-linejoin="round"/><polygon points="880,115 950,115 950,170 880,170" fill="url(#zd)" stroke="#3d5576" stroke-width="5" stroke-linejoin="round"/><polyline points="952,142 980,142" fill="none" stroke="#b3202d" stroke-width="12" stroke-linejoin="round"/><polygon points="972,120 995,142 972,164" fill="#b3202d" stroke="#b3202d" stroke-width="2" stroke-linejoin="round"/><polygon points="1005,38 1020,38 1020,170 1005,170" fill="#34507a" stroke="#3d5576" stroke-width="3" stroke-linejoin="round"/><path d="M1165 80 C1195 30 1255 30 1283 80" fill="none" stroke="#4f6d9c" stroke-width="9"/><circle cx="1222" cy="68" r="21" fill="#4a6a9c"/><circle cx="1212" cy="60" r="7" fill="#e6ecf5"/><polyline points="1150,128 1290,128" fill="none" stroke="#8a1a2a" stroke-width="10" stroke-linejoin="round"/><polygon points="1150,140 1290,140 1290,170 1150,170" fill="url(#zd)" stroke="#3d5576" stroke-width="5" stroke-linejoin="round"/><polygon points="1430,145 1520,45 1555,72 1462,168" fill="url(#zl)" stroke="#3d5576" stroke-width="5" stroke-linejoin="round"/><polyline points="1480,95 1500,115" fill="none" stroke="#3d5576" stroke-width="4" stroke-linejoin="round"/><polyline points="1432,48 1478,92" fill="none" stroke="#b3202d" stroke-width="14" stroke-linejoin="round"/><polyline points="1478,48 1432,92" fill="none" stroke="#b3202d" stroke-width="14" stroke-linejoin="round"/><text x="1693" y="90" font-size="62" font-weight="bold" fill="#48648e" font-family="Liberation Sans" >Abc</text><path d="M1735 120 C1740 100 1765 100 1770 115" fill="none" stroke="#b3202d" stroke-width="9"/><path d="M1760 110 l15 8 -3 -16z" fill="#b3202d"/><path d="M1780 140 C1775 160 1750 160 1745 145" fill="none" stroke="#b3202d" stroke-width="9"/><path d="M1755 150 l-15 -8 3 16z" fill="#b3202d"/><text x="62" y="428" font-size="70" font-weight="bold" fill="#34568a" font-family="Liberation Sans" >123</text><polyline points="65,436 205,436" fill="none" stroke="#1f3556" stroke-width="9" stroke-linejoin="round"/><polyline points="132,312 192,366" fill="none" stroke="#b3202d" stroke-width="14" stroke-linejoin="round"/><polyline points="192,312 132,366" fill="none" stroke="#b3202d" stroke-width="14" stroke-linejoin="round"/><polygon points="338,340 375,340 375,440 338,440" fill="url(#zd)" stroke="#3d5576" stroke-width="5" stroke-linejoin="round"/><polygon points="338,340 375,310 415,310 375,340" fill="#eef2f7" stroke="#3d5576" stroke-width="5" stroke-linejoin="round"/><polygon points="375,340 415,310 415,410 375,440" fill="url(#zl)" stroke="#3d5576" stroke-width="5" stroke-linejoin="round"/><path d="M405 390 C410 370 435 370 440 385" fill="none" stroke="#b3202d" stroke-width="9"/><path d="M430 380 l15 8 -3 -16z" fill="#b3202d"/><path d="M450 410 C445 430 420 430 415 415" fill="none" stroke="#b3202d" stroke-width="9"/><path d="M425 420 l-15 -8 3 16z" fill="#b3202d"/><polygon points="650,350 748,350 748,428 650,428" fill="url(#zd)" stroke="#3d5576" stroke-width="5" stroke-linejoin="round"/><circle cx="683" cy="348" r="32" fill="#f4f6fa" stroke="#3d5576" stroke-width="7"/><polyline points="660,372 615,418" fill="none" stroke="#4d6a90" stroke-width="16" stroke-linejoin="round"/><polyline points="905,315 905,440" fill="none" stroke="#3d5576" stroke-width="5" stroke-linejoin="round"/><polyline points="880,380 1015,380" fill="none" stroke="#3d5576" stroke-width="5" stroke-linejoin="round"/><circle cx="905" cy="380" r="13" fill="none" stroke="#3d5576" stroke-width="5"/><text x="913" y="352" font-size="42" font-weight="normal" fill="#3d5576" font-family="Liberation Sans" >ABC</text><circle cx="952" cy="420" r="17" fill="#b3202d"/><circle cx="985" cy="420" r="17" fill="#b3202d"/><polygon points="1205,310 1290,310 1290,390 1205,390" fill="url(#zd)" stroke="#3d5576" stroke-width="5" stroke-linejoin="round"/><polygon points="1158,355 1245,355 1245,440 1158,440" fill="#f0f3f8" stroke="#3d5576" stroke-width="5" stroke-linejoin="round"/><polygon points="1220,370 1268,322 1290,345 1242,392" fill="#c0303a" stroke="#8c1a22" stroke-width="3" stroke-linejoin="round"/><polygon points="1215,375 1238,396 1210,402" fill="#111" stroke="#111" stroke-width="2" stroke-linejoin="round"/><polygon points="1478,310 1562,310 1562,395 1478,395" fill="url(#zl)" stroke="#3d5576" stroke-width="5" stroke-linejoin="round"/><polygon points="1430,355 1520,355 1520,440 1430,440" fill="url(#zd)" stroke="#3d5576" stroke-width="5" stroke-linejoin="round"/><polyline points="1432,357 1490,400" fill="none" stroke="#3d5576" stroke-width="4" stroke-linejoin="round"/><polyline points="1465,425 1520,375" fill="none" stroke="#7a1b24" stroke-width="6" stroke-linejoin="round"/><polygon points="1510,355 1545,335 1560,360 1530,390" fill="#c0303a" stroke="#8c1a22" stroke-width="3" stroke-linejoin="round"/><polyline points="1695,335 1695,322 1835,322 1835,335" fill="none" stroke="#b3202d" stroke-width="9" stroke-linejoin="round"/><polyline points="1765,322 1765,310" fill="none" stroke="#b3202d" stroke-width="7" stroke-linejoin="round"/><polygon points="1740,340 1805,340 1805,400 1740,400" fill="url(#zd)" stroke="#3d5576" stroke-width="5" stroke-linejoin="round"/><polygon points="1700,370 1765,370 1765,440 1700,440" fill="url(#zd)" stroke="#3d5576" stroke-width="5" stroke-linejoin="round"/><polyline points="65,580 200,580" fill="none" stroke="#333" stroke-width="3" stroke-linejoin="round"/><path d="M65 580 H200 M65 580 V700" fill="none" stroke="#333" stroke-width="3" stroke-dasharray="4 5"/><path d="M70 705 V655 C70 610 110 582 155 582 H200" fill="none" stroke="#6d84a5" stroke-width="9"/><polygon points="360,632 395,617 395,697 360,712" fill="url(#zh)" stroke="#3d5576" stroke-width="5" stroke-linejoin="round"/><polygon points="405,627 455,612 455,692 405,707" fill="url(#zd)" stroke="#3d5576" stroke-width="5" stroke-linejoin="round"/><polyline points="430,620 430,700" fill="none" stroke="#3d5576" stroke-width="4" stroke-linejoin="round"/><polyline points="405,667 455,652" fill="none" stroke="#3d5576" stroke-width="4" stroke-linejoin="round"/><polygon points="632,632 667,617 667,697 632,712" fill="url(#zh)" stroke="#3d5576" stroke-width="5" stroke-linejoin="round"/><polygon points="677,627 727,612 727,692 677,707" fill="url(#zd)" stroke="#3d5576" stroke-width="5" stroke-linejoin="round"/><polyline points="702,620 702,700" fill="none" stroke="#3d5576" stroke-width="4" stroke-linejoin="round"/><polyline points="677,667 727,652" fill="none" stroke="#3d5576" stroke-width="4" stroke-linejoin="round"/><circle cx="390" cy="600" r="17" fill="#b3202d"/><circle cx="424" cy="600" r="17" fill="#b3202d"/><path d="M640 625 C650 580 705 575 715 615" fill="none" stroke="#b3202d" stroke-width="9"/><path d="M625 612 l18 20 10 -22z" fill="#b3202d"/></svg>
<div class="a" style="left:884px;top:77px;width:1004px;height:1034px;background:#000;overflow:hidden">
<div class="a" style="left:0;top:0;width:2px;height:1034px;background:#cbdffe"></div>
<svg style="left:2px;top:0" width="1002" height="1034"><polyline points="47.5,0.5 47.5,110.5" fill="none" stroke="#b9a26e" stroke-width="1"/><polyline points="68.5,0.5 68.5,110.5" fill="none" stroke="#b9a26e" stroke-width="1"/><polyline points="68.5,30.5 286.5,30.5" fill="none" stroke="#b9a26e" stroke-width="1"/><polyline points="68.5,40.5 286.5,40.5" fill="none" stroke="#b9a26e" stroke-width="1"/><polyline points="376.5,0.5 376.5,30.5" fill="none" stroke="#b9a26e" stroke-width="1"/><polyline points="386.5,0.5 386.5,30.5 422.5,30.5" fill="none" stroke="#b9a26e" stroke-width="1"/><polyline points="376.5,40.5 422.5,40.5" fill="none" stroke="#b9a26e" stroke-width="1"/><polyline points="512.5,30.5 744.5,30.5 744.5,40.5 675.5,40.5 675.5,62.5 532.5,62.5 532.5,57.5 669.5,57.5 669.5,40.5 512.5,40.5" fill="none" stroke="#b9a26e" stroke-width="1"/><polyline points="0.5,212.5 47.5,212.5 47.5,205.5" fill="none" stroke="#b9a26e" stroke-width="1"/><polyline points="0.5,232.5 47.5,232.5 47.5,276.5 68.5,276.5 68.5,205.5" fill="none" stroke="#b9a26e" stroke-width="1"/><polyline points="745.5,222.5 532.5,222.5 532.5,232.5 745.5,232.5" fill="none" stroke="#b9a26e" stroke-width="1"/><polyline points="755.5,323.5 785.5,323.5 785.5,326.5" fill="none" stroke="#b9a26e" stroke-width="1"/><polyline points="745.5,322.5 745.5,326.5" fill="none" stroke="#b9a26e" stroke-width="1"/><polyline points="745.5,0.5 745.5,232.5" fill="none" stroke="#f4f4f4" stroke-width="1"/><polyline points="764.5,0.5 764.5,73.5" fill="none" stroke="#f4f4f4" stroke-width="1"/><polyline points="781.5,0.5 781.5,79.5" fill="none" stroke="#f4f4f4" stroke-width="1"/><polyline points="785.5,0.5 785.5,79.5" fill="none" stroke="#f4f4f4" stroke-width="1"/><polyline points="745.5,73.5 764.5,73.5 764.5,191.5 745.5,191.5" fill="none" stroke="#f4f4f4" stroke-width="1"/><polyline points="757.5,80.5 763.5,80.5 763.5,181.5 757.5,181.5 757.5,80.5" fill="none" stroke="#f4f4f4" stroke-width="1"/><polyline points="764.5,79.5 788.5,79.5 788.5,183.5 764.5,183.5" fill="none" stroke="#f4f4f4" stroke-width="1"/><polyline points="764.5,185.5 788.5,185.5" fill="none" stroke="#f4f4f4" stroke-width="1"/><polyline points="764.5,191.5 764.5,213.5 1002.5,213.5" fill="none" stroke="#f4f4f4" stroke-width="1"/><polyline points="781.5,183.5 781.5,195.5 1002.5,195.5" fill="none" stroke="#f4f4f4" stroke-width="1"/><polyline points="788.5,183.5 788.5,193.5 1002.5,193.5" fill="none" stroke="#f4f4f4" stroke-width="1"/><polyline points="745.5,232.5 1002.5,232.5" fill="none" stroke="#f4f4f4" stroke-width="1"/><polyline points="745.5,231.5 764.5,213.5" fill="none" stroke="#f4f4f4" stroke-width="1"/><polyline points="753.5,133.5 757.5,133.5" fill="none" stroke="#f4f4f4" stroke-width="1"/><polyline points="753.5,133.5 753.5,143.5" fill="none" stroke="#f4f4f4" stroke-width="1"/><polyline points="0.5,970.5 281.5,970.5 281.5,960.5" fill="none" stroke="#f4f4f4" stroke-width="1"/><polyline points="281.5,970.5 299.5,988.5 299.5,960.5" fill="none" stroke="#f4f4f4" stroke-width="1"/><polyline points="48.5,988.5 299.5,988.5" fill="none" stroke="#f4f4f4" stroke-width="1"/><polyline points="44.5,970.5 44.5,988.5" fill="none" stroke="#f4f4f4" stroke-width="1"/><polyline points="48.5,970.5 48.5,988.5" fill="none" stroke="#f4f4f4" stroke-width="1"/><polyline points="0.5,983.5 36.5,983.5 36.5,1011.5 0.5,1011.5" fill="none" stroke="#f4f4f4" stroke-width="1"/><polyline points="0.5,987.5 34.5,987.5" fill="none" stroke="#f4f4f4" stroke-width="1"/><polyline points="38.5,985.5 38.5,1011.5" fill="none" stroke="#f4f4f4" stroke-width="1"/><polyline points="48.5,1006.5 317.5,1006.5 317.5,960.5" fill="none" stroke="#f4f4f4" stroke-width="1"/><polyline points="0.5,1008.5 320.5,1008.5 320.5,960.5" fill="none" stroke="#f4f4f4" stroke-width="1"/><rect x="280.5" y="212.5" width="20" height="60" fill="none" stroke="#c8333d" stroke-width="1.2"/></svg>
</div>
<div class="a" style="left:1338px;top:77px;width:99px;height:26px;background:#7e7f86"></div>
<div class="t" style="left:1348px;top:84px;font-size:13px;color:#3d3f4a">Vue en plan:1</div>
<svg style="left:891px;top:1083px" width="22" height="22" viewBox="0 0 22 22"><circle cx="11" cy="11" r="10" fill="#bfc6d0" stroke="#8e98a6"/><path d="M11 2l2 3h-4z M11 20l2-3h-4z M2 11l3 2v-4z M20 11l-3 2v-4z M5 5l3 1-2 2z M17 5l-3 1 2 2z M5 17l3-1-2-2z M17 17l-3-1 2-2z" fill="#4a5d7a"/><rect x="7.5" y="7.5" width="7" height="7" fill="#e8504a" stroke="#a22"/></svg>
<div class="a" style="left:384px;top:77px;width:500px;height:1034px;background:#cbdffe;overflow:hidden"><svg style="left:-384px;top:-77px" width="1888" height="1111"><polygon points="384,563 523,512 526,528 640,485 664,477 749,512 750,493 883,438 883,487 836,492 749,531 664,497 640,503 446,580 384,602" fill="#c5c8cc" /><polygon points="664,481 749,516 749,531 664,497" fill="#a7acb2" /><polygon points="384,557 522,510 523,513 384,564" fill="#fbfbfb" /><polygon points="526,528 664,476 664,481 526,533" fill="#fbfbfb" /><polygon points="664,476 749,511 749,516 664,481" fill="#fbfbfb" /><polygon points="750,493 883,437 883,442 750,498" fill="#fbfbfb" /><polygon points="523,512 526,528 526,533 523,518" fill="#aeb2b7" /><polygon points="384,570 420.5,557.6 439.4,577.4 394.4,593.6" fill="#c9bea9" /><polygon points="394.4,593.6 439.4,577.4 442,606 403.4,626" fill="#c2b6a1" /><polygon points="384,586 394.4,593.6 403.4,626 384,610" fill="#b8ad99" /><polygon points="420.5,557.6 464.6,599 442,606 439.4,577.4" fill="#a99e8a" /><polyline points="384,570 420.5,557.6" fill="none" stroke="#f4efe6" stroke-width="1" stroke-dasharray="2 1"/><polyline points="394.4,593.6 439.4,577.4" fill="none" stroke="#f4efe6" stroke-width="1" stroke-dasharray="2 1"/><polyline points="384,586 394.4,593.6 403.4,626" fill="none" stroke="#eee8dc" stroke-width="0.8" stroke-dasharray="2 1"/><polygon points="412.4,622.4 423,618.8 434,669 425,654.8" fill="#b3a894" /><polygon points="836,467 862,458 883,450 883,507 836,492" fill="#ab9f8b" /><polygon points="841,466 862,458 866,470" fill="#aea491" /><polyline points="841,466 862,458" fill="none" stroke="#f2ede4" stroke-width="0.8"/><polyline points="870,470 883,466" fill="none" stroke="#f2ede4" stroke-width="0.8"/><polygon points="860,562 873,513 883,509 883,556" fill="#3e2e1c" /><polygon points="871,566 883,558 883,572" fill="#e8e8e8" /><polygon points="855,611 867,567 883,570 883,627" fill="#3e2e1c" /><polygon points="424,619 602,543 669,585 735,551 778,572 778,578 819,598 830,599 672,702 737,740 619,830" fill="#d4e2fb" /><polygon points="436,620 602,549 669,591 669,606 641,581 524,633 512.6,672.9 499,681 474.8,658 440,628" fill="#c5c8cc" /><polygon points="492,596 526,583 526,632 492,648" fill="#b4c3d2" /><polygon points="521,590 527,588 527,630 521,633" fill="#5e6670" /><polygon points="605,556 627,567 627,594 605,600" fill="#b4c3d2" /><polygon points="603,555 607,557 607,598 603,600" fill="#5e6670" /><polygon points="484,605 551.7,664.8 557,716 512.6,672.9" fill="#a9aeb5" /><polygon points="542,579 578,605 578,628 546,620" fill="#989da4" /><polygon points="524,633 641,581 641,636 567,665 555,670" fill="#c5c8cc" /><polygon points="589,611 605,604 605,642 589,649" fill="#d4e2fb" /><polygon points="566,627 582,620 582,658 567,665" fill="#989da4" /><polygon points="500.4,683.7 545,664.8 555.8,716 537,721.5 510,691.8" fill="#c3c6ca" /><polygon points="548,664 553,664 557,716 552,717" fill="#989da4" /><polygon points="669,591 735,557 733,603 681,611 669,605" fill="#c5c8cc" /><polygon points="711,566 733,558 733,605 711,609" fill="#b4c3d2" /><polygon points="708,567 712,566 712,609 708,610" fill="#5e6670" /><polygon points="735,557 774,579 813,603 770,629 733,605" fill="#989da4" /><polygon points="640,600 669,596 681,611 681,644 640,657" fill="#c2c5c9" /><polygon points="634,612 668,596 681,600 681,636 634,661" fill="#c3c6ca" /><polygon points="681,611 746,646 718,668 681,665" fill="#b0b5bb" /><polygon points="688,603 720,600 728,611 696,614" fill="#b0b5bb" /><polygon points="670,704 728,741 718,748 668,756" fill="#b0b5bb" /><polyline points="481,602 550,662" fill="none" stroke="#fbfbfb" stroke-width="2.5"/><polyline points="542,579 578,605" fill="none" stroke="#fbfbfb" stroke-width="2.5"/><polyline points="524,633 641,581" fill="none" stroke="#fbfbfb" stroke-width="2.5"/><polyline points="499,684 548,662" fill="none" stroke="#fbfbfb" stroke-width="2.5"/><polyline points="634,612 668,596" fill="none" stroke="#fbfbfb" stroke-width="2.5"/><polyline points="669,596 746,646" fill="none" stroke="#fbfbfb" stroke-width="2.5"/><polyline points="687,603 720,600" fill="none" stroke="#fbfbfb" stroke-width="2.5"/><polyline points="424,622 602,546 669,588 735,554 778,575 778,581 819,601 826,602" fill="none" stroke="#fbfbfb" stroke-width="6"/><polyline points="428.0392164670665,615.2670748290143 625.7540711368744,829.2046868050627" fill="none" stroke="#fbfbfb" stroke-width="5.5"/><polyline points="425.17504479041935,617.9140581320769 622.8898994602272,831.8516701081253" fill="none" stroke="#a9acb0" stroke-width="3.2"/><polyline points="612.4840405209084,828.0526243128671 735.254774038175,734.4139292573248" fill="none" stroke="#fbfbfb" stroke-width="5.5"/><polyline points="614.849192307011,831.1536010990905 737.6199258242776,737.5149060435481" fill="none" stroke="#a9acb0" stroke-width="3.2"/><polyline points="828.6718489069577,593.3003496007167 665.6455525548455,699.5769858302582" fill="none" stroke="#fbfbfb" stroke-width="5.5"/><polyline points="830.8016624561596,596.5674422295896 667.7753661040474,702.8440784591311" fill="none" stroke="#a9acb0" stroke-width="3.2"/><polyline points="734,740 670,703" fill="none" stroke="#fbfbfb" stroke-width="6"/><polyline points="424,619 602,543 669,585 735,551 778,572 778,578 819,598 830,599" fill="none" stroke="#2b2017" stroke-width="2.2"/><polygon points="424,619 619,830 620,886 448,700" fill="#3e2e1c" /><polygon points="619,830 737,740 731,795 620,886" fill="#3e2e1c" /><polygon points="830,599 672,702 716,727 819,648" fill="#3e2e1c" /><polyline points="672,702 737,740" fill="none" stroke="#fbfbfb" stroke-width="5"/><polygon points="468,682 476,686 491,735 483,730" fill="#4e5560" /><polygon points="472,690 478,692 488,729 482,726" fill="#b4c3d2" /><polygon points="507,751 565,813 565,823 507,760" fill="#9a9fa6" /><polygon points="507,721.5 561,775.5 564,815 510,752" fill="#b4c3d2" /><polyline points="535,750 537,790" fill="none" stroke="#5d6670" stroke-width="1"/><polygon points="496.4,708 507,721.5 507,751 499,745.8" fill="#4e5560" /><polygon points="632,834 676,799 676,838 632,868" fill="#8f949a" /><polygon points="635,834 674,803 674,830 635,860" fill="#b4c3d2" /><polyline points="654,818 654,846" fill="none" stroke="#6b7480" stroke-width="1"/><polygon points="676,799 681,795 681,835 676,838" fill="#4e5560" /><polygon points="763,657 777,650 777,666 763,672" fill="#8f949a" /><polygon points="765,659 775,654 775,664 765,668" fill="#b4c3d2" /><polygon points="690,706 713,692 714,722 692,716" fill="#b4c3d2" /><polygon points="711,694 716,690 717,725 713,724" fill="#4e5560" /><polygon points="587,634 596,638 601.5,689 596,692 589.5,684" fill="#9aa3ad" stroke="#f01010" stroke-width="3.6" stroke-linejoin="round"/><polyline points="591,640 597,686" fill="none" stroke="#e02020" stroke-width="1.6"/><polyline points="596,638 596,692" fill="none" stroke="#d04050" stroke-width="1"/></svg></div>
<div class="a" style="left:883px;top:77px;width:3px;height:1034px;background:#e6edf6"></div>
<div class="a" style="left:574px;top:77px;width:118px;height:26px;background:#dce5f6;border:1px solid #a9b7cb;border-top:0"></div>
<div class="t" style="left:585px;top:84px;font-size:13px;color:#8e9cb1">Persp. centrale:2</div>
<svg style="left:389px;top:1084px" width="22" height="22" viewBox="0 0 22 22"><circle cx="11" cy="11" r="10" fill="#f2f5fa" stroke="#c9d2de"/><path d="M11 1.5l2.5 3h-5z M11 20.5l2.5-3h-5z M1.5 11l3 2.5v-5z M20.5 11l-3 2.5v-5z M4 4l4 1.5-2.5 2.5z M18 4l-4 1.5 2.5 2.5z M4 18l4-1.5-2.5-2.5z M18 18l-4-1.5 2.5-2.5z" fill="#2f3f55"/><rect x="8" y="8" width="6" height="6" fill="#eceff3" stroke="#8d949c"/></svg>
<div class="a" style="left:384px;top:1110px;width:1504px;height:1px;background:#dfe5ee"></div>
<div class="a" style="left:904px;top:403px;width:969px;height:634px;background:linear-gradient(#e6eef8,#cfdeef 30px,#d4e1f0 30px,#d4e1f0);border:1px solid #8d9cb0;border-radius:6px 6px 0 0"></div>
<div class="a" style="left:908px;top:433px;width:960px;height:599px;background:#fff;border:1px solid #b9c9dc"></div>
<div class="t" style="left:912px;top:415.2px;font-size:12.5px;color:#4a4d55;">Mur</div>
<svg style="left:1850px;top:413px" width="11" height="11"><path d="M1.5 1.5l8 8 M9.5 1.5l-8 8" stroke="#7d858f" stroke-width="2.8"/></svg>
<div class="a" style="left:916px;top:447px;width:6px;height:1px;background:#dde4ec"></div>
<div class="a" style="left:1023px;top:447px;width:267px;height:1px;background:linear-gradient(90deg,#dde4ec,#dde4ec 85%,#fff)"></div>
<div class="a" style="left:916px;top:447px;width:1px;height:41px;background:linear-gradient(#dde4ec,#dde4ec 85%,#fff)"></div>
<div class="t" style="left:924.5px;top:443.8px;font-size:10.8px;color:#000;">Nombre de couches</div>
<div class="a" style="left:925px;top:462px;width:57px;height:23px;background:#fff;border:1px solid #b7c2cf"></div>
<div class="a" style="left:965px;top:463px;width:16px;height:10px;background:linear-gradient(#f2f5f9,#d3dce7)"></div>
<div class="a" style="left:965px;top:474px;width:16px;height:10px;background:linear-gradient(#c9d6e6,#a9bcd3)"></div>
<svg style="left:969px;top:466px" width="8" height="16"><path d="M0 4h7l-3.5-4z" fill="#111"/><path d="M0 11h7l-3.5 4z" fill="#111"/></svg>
<div class="t" style="left:934px;top:467.0px;font-size:10.8px;color:#000;">3</div>
<div class="t" style="left:1039.5px;top:464.5px;font-size:10.8px;color:#000;">Mode de modification</div>
<svg width="0" height="0" style="left:0;top:0"><defs><linearGradient id="ginfo" x1="0" y1="0" x2="0" y2="1"><stop offset="0" stop-color="#a7b6c9"/><stop offset="1" stop-color="#5f7592"/></linearGradient><linearGradient id="grad" x1="0" y1="0" x2="1" y2="1"><stop offset="0" stop-color="#cfd6df"/><stop offset="1" stop-color="#fafbfc"/></linearGradient></defs></svg>
<svg style="left:1148px;top:462px" width="15" height="15"><rect x="0" y="0" width="15" height="15" fill="url(#ginfo)"/><rect x="0.5" y="0.5" width="14" height="14" fill="none" stroke="#4a5d76"/><rect x="6" y="3" width="3" height="2.4" fill="#fff"/><path d="M5 6.5h4v5.5h1.5v1.2h-5.5V12h1.3V7.7H5z" fill="#fff"/></svg>
<svg style="left:1177px;top:463px" width="14" height="14"><circle cx="7" cy="7" r="6" fill="url(#grad)" stroke="#8594a8"/><circle cx="7" cy="7" r="3" fill="#3d5d8a"/></svg>
<div class="t" style="left:1193.5px;top:464.7px;font-size:10.8px;color:#000;">Mur</div>
<svg style="left:1177px;top:483px" width="14" height="14"><circle cx="7" cy="7" r="6" fill="url(#grad)" stroke="#8594a8"/></svg>
<div class="t" style="left:1194px;top:485.0px;font-size:10.8px;color:#000;">Axe</div>
<div class="a" style="left:916px;top:511px;width:6px;height:1px;background:#dde4ec"></div>
<div class="a" style="left:1027px;top:511px;width:263px;height:1px;background:linear-gradient(90deg,#dde4ec,#dde4ec 85%,#fff)"></div>
<div class="a" style="left:916px;top:511px;width:1px;height:209px;background:linear-gradient(#dde4ec,#dde4ec 85%,#fff)"></div>
<div class="t" style="left:925px;top:507.4px;font-size:10.8px;color:#000;">Axe, positionnement</div>
<svg style="left:927px;top:524px" width="15" height="15"><rect x="0" y="0" width="15" height="15" fill="url(#ginfo)"/><rect x="0.5" y="0.5" width="14" height="14" fill="none" stroke="#4a5d76"/><rect x="6" y="3" width="3" height="2.4" fill="#fff"/><path d="M5 6.5h4v5.5h1.5v1.2h-5.5V12h1.3V7.7H5z" fill="#fff"/></svg>
<div class="t" style="left:1169.5px;top:527.2px;font-size:10.8px;color:#000;">Couche n°</div>
<div class="t" style="left:1228px;top:527.2px;font-size:10.8px;color:#000;">Epaiss.</div>
<div class="a" style="left:923px;top:545px;width:65px;height:20px;background:#fff;border:1px solid #b7c2cf"></div>
<div class="t" style="left:937.5px;top:550.0px;font-size:10.8px;color:#000;">10.0000</div>
<div class="a" style="left:923px;top:584px;width:65px;height:20px;background:#fff;border:1px solid #b7c2cf"></div>
<div class="t" style="left:937.5px;top:589.0px;font-size:10.8px;color:#000;">10.0000</div>
<svg style="left:994px;top:542px" width="12" height="66"><path d="M5.5 1v62 M1.5 1.5h8 M1.5 31.5h8 M1.5 62.5h8" stroke="#111" stroke-width="1.1"/></svg>
<svg style="left:1036px;top:542px" width="134" height="64"><path d="M0 1.5h133 M0 4.5h133 M0 59.5h133 M0 62.5h133" stroke="#c5a35f" stroke-width="1.05"/></svg>
<div class="t" style="left:1207.5px;top:548.4px;font-size:10.8px;color:#000;">1</div>
<div class="t" style="left:1222.5px;top:548.4px;font-size:10.8px;color:#000;">1.0000</div>
<div class="t" style="left:1207.5px;top:569.1px;font-size:10.8px;color:#000;">2</div>
<div class="t" style="left:1222.5px;top:569.1px;font-size:10.8px;color:#000;">18.0000</div>
<div class="t" style="left:1207.5px;top:589.8px;font-size:10.8px;color:#000;">3</div>
<div class="t" style="left:1222.5px;top:589.8px;font-size:10.8px;color:#000;">1.0000</div>
<div class="t" style="left:1125px;top:707.6px;font-size:10.8px;color:#000;">Epaiss. totale :</div>
<div class="t" style="left:1222px;top:707.6px;font-size:10.8px;color:#000;">20.0000</div>
<div class="a" style="left:916px;top:735px;width:374px;height:1px;background:linear-gradient(90deg,#dde4ec,#dde4ec 85%,#fff)"></div>
<div class="a" style="left:916px;top:735px;width:1px;height:32px;background:linear-gradient(#dde4ec,#fff)"></div>
<div class="t" style="left:925px;top:748.7px;font-size:10.8px;color:#000;">Hauteur couche 1 :</div>
<div class="a" style="left:1025px;top:743px;width:98px;height:21px;background:#fff;border:1px solid #b7c2cf"></div>
<div class="t" style="left:1050.8px;top:748.7px;font-size:10.8px;color:#000;">286.2000</div>
<div class="a" style="left:1138px;top:743px;width:75px;height:22px;background:linear-gradient(#f3f6fa,#dbe4ef 50%,#cbd8e8);border:1px solid #8a9bb1;border-radius:3px"></div>
<div class="t" style="left:1138px;top:749.0px;width:75px;text-align:center;font-size:10.8px;color:#000">Hauteur...</div>
<svg style="left:1223px;top:745px" width="40" height="14"><path d="M1.5 7h12l-6-6z" fill="none" stroke="#3f5a7e" stroke-width="1.1"/><path d="M25.5 6.5h12l-6 6z" fill="none" stroke="#3f5a7e" stroke-width="1.1"/></svg>
<div class="a" style="left:1294px;top:447px;width:6px;height:1px;background:#dde4ec"></div>
<div class="a" style="left:1340px;top:447px;width:522px;height:1px;background:linear-gradient(90deg,#dde4ec,#dde4ec 85%,#fff)"></div>
<div class="a" style="left:1294px;top:447px;width:1px;height:333px;background:linear-gradient(#dde4ec,#dde4ec 85%,#fff)"></div>
<div class="t" style="left:1302.7px;top:443.0px;font-size:10.8px;color:#000;">Aperçu</div>
<div class="a" style="left:1304px;top:467px;width:557px;height:309px;background:#000"></div>
<div class="a" style="left:1329px;top:612px;width:506px;height:19px;border:1.5px solid #c9a45e"></div>
<svg style="left:1304px;top:754px" width="22" height="22" viewBox="0 0 22 22"><circle cx="11" cy="11" r="10" fill="#c5ccd5" stroke="#8f98a4"/><path d="M11 2l2 3h-4z M11 20l2-3h-4z M2 11l3 2v-4z M20 11l-3 2v-4z M5 5l3 1-2 2z M17 5l-3 1 2 2z M5 17l3-1-2-2z M17 17l-3-1 2-2z" fill="#7a8597"/><rect x="8" y="8" width="6" height="6" fill="#e8e2e2" stroke="#aaa"/></svg>
<div class="a" style="left:913px;top:803px;width:948px;height:194px;border:1px solid #a2acb8;background:#fff"></div>
<div class="a" style="left:1031px;top:788px;width:107px;height:16px;background:linear-gradient(#eef3f9,#c9d7e8);border:1px solid #9fadbe;border-bottom:0;border-radius:3px 3px 0 0"></div>
<div class="t" style="left:1035.6px;top:791.0px;font-size:10.8px;color:#000;">Propriétés de format</div>
<div class="a" style="left:1143px;top:788px;width:146px;height:16px;background:linear-gradient(#eef3f9,#c9d7e8);border:1px solid #9fadbe;border-bottom:0;border-radius:3px 3px 0 0"></div>
<div class="t" style="left:1146.6px;top:791.0px;font-size:10.8px;color:#000;">Représentation des surfaces</div>
<div class="a" style="left:1293px;top:788px;width:38px;height:16px;background:linear-gradient(#eef3f9,#c9d7e8);border:1px solid #9fadbe;border-bottom:0;border-radius:3px 3px 0 0"></div>
<div class="t" style="left:1299px;top:791.0px;font-size:10.8px;color:#000;">Total</div>
<div class="a" style="left:915px;top:785px;width:115px;height:20px;background:#fff;border:1px solid #a2acb8;border-bottom:0;border-radius:3px 3px 0 0"></div>
<div class="t" style="left:918px;top:789.3px;font-size:10.8px;color:#000;">Paramètres, attributs</div>
<div class="t" style="left:924.4px;top:815.6px;font-size:10.8px;color:#000;">Identique dans toutes les couches :</div>
<svg style="left:1109px;top:815px" width="13" height="13"><rect x="0.5" y="0.5" width="12" height="12" fill="url(#grad)" stroke="#9aa7b6"/></svg>
<div class="t" style="left:1124.6px;top:815.6px;font-size:10.8px;color:#000;">Hauteur</div>
<svg style="left:1180px;top:815px" width="13" height="13"><rect x="0.5" y="0.5" width="12" height="12" fill="url(#grad)" stroke="#9aa7b6"/></svg>
<div class="t" style="left:1195.5px;top:815.6px;font-size:10.8px;color:#000;">Métier</div>
<svg style="left:1242px;top:815px" width="13" height="13"><rect x="0.5" y="0.5" width="12" height="12" fill="url(#grad)" stroke="#9aa7b6"/></svg>
<div class="t" style="left:1257.6px;top:815.6px;font-size:10.8px;color:#000;">Priorité</div>
<svg style="left:1308px;top:815px" width="13" height="13"><rect x="0.5" y="0.5" width="12" height="12" fill="url(#grad)" stroke="#9aa7b6"/></svg>
<div class="t" style="left:1323.3px;top:815.6px;font-size:10.8px;color:#000;">Grandeur</div>
<svg style="left:1385px;top:815px" width="13" height="13"><rect x="0.5" y="0.5" width="12" height="12" fill="url(#grad)" stroke="#9aa7b6"/><path d="M2.5 6.5l3 3 5-7" fill="none" stroke="#2f5d99" stroke-width="1.8"/></svg>
<div class="t" style="left:1400.2px;top:815.6px;font-size:10.8px;color:#000;">Interaction</div>
<svg style="left:1470px;top:815px" width="13" height="13"><rect x="0.5" y="0.5" width="12" height="12" fill="url(#grad)" stroke="#c9ced5"/><path d="M2.5 6.5l3 3 5-7" fill="none" stroke="#b9c1cb" stroke-width="1.8"/></svg>
<div class="t" style="left:1485.1px;top:815.6px;font-size:10.8px;color:#a3a3a3;">Raccord auto</div>
<div class="a" style="left:925px;top:839px;width:925px;height:118px;background:#fff;border:1px solid #aab4c0;overflow:hidden"></div>
<div class="a" style="left:926px;top:840px;width:923px;height:24px;background:linear-gradient(#fbfcfe,#e2e9f2);border-bottom:1px solid #aeb9c6"></div>
<div class="a" style="left:1008px;top:841px;width:1px;height:23px;background:#c8d1dc"></div>
<div class="a" style="left:1083px;top:841px;width:1px;height:23px;background:#c8d1dc"></div>
<div class="a" style="left:1157px;top:841px;width:1px;height:23px;background:#c8d1dc"></div>
<div class="a" style="left:1223px;top:841px;width:1px;height:23px;background:#c8d1dc"></div>
<div class="a" style="left:1399px;top:841px;width:1px;height:23px;background:#c8d1dc"></div>
<div class="a" style="left:1574px;top:841px;width:1px;height:23px;background:#c8d1dc"></div>
<div class="a" style="left:1634px;top:841px;width:1px;height:23px;background:#c8d1dc"></div>
<div class="a" style="left:1709px;top:841px;width:1px;height:23px;background:#c8d1dc"></div>
<div class="a" style="left:1796px;top:841px;width:1px;height:23px;background:#c8d1dc"></div>
<div class="t" style="left:935px;top:847.6px;font-size:10.8px;color:#000;">Numéro</div>
<div class="t" style="left:1017.2px;top:847.6px;font-size:10.8px;color:#000;">Epaiss.</div>
<div class="t" style="left:1091.7px;top:847.6px;font-size:10.8px;color:#000;">Hauteur</div>
<div class="t" style="left:1188px;top:847.6px;font-size:10.8px;color:#000;">Déf...</div>
<div class="t" style="left:1232.2px;top:847.6px;font-size:10.8px;color:#000;">Matériau/Qualités</div>
<div class="t" style="left:1408px;top:847.6px;font-size:10.8px;color:#000;">Métier</div>
<div class="t" style="left:1583px;top:847.6px;font-size:10.8px;color:#000;">Priorité</div>
<div class="t" style="left:1643px;top:847.6px;font-size:10.8px;color:#000;">Grandeur</div>
<div class="t" style="left:1718.3px;top:847.6px;font-size:10.8px;color:#000;">Interaction</div>
<div class="a" style="left:1797px;top:844px;width:51px;height:16px;overflow:hidden"><div class="t" style="left:8.4px;top:3.6px;font-size:10.8px;color:#000;">RaccordA</div></div>
<svg style="left:1163px;top:843px" width="18" height="18"><path d="M1 1.5h16 M1 16.5h16" stroke="#3f5a7e" stroke-width="1.2"/><path d="M5 15V5 M2 8l3-3 3 3 M13 3v10 M10 10l3 3 3-3" fill="none" stroke="#3f5a7e" stroke-width="1.1"/></svg>
<div class="t" style="left:930.7px;top:867.1px;font-size:10.8px;color:#000;">1</div>
<div class="t" style="left:1012.3px;top:867.1px;font-size:10.8px;color:#000;">1.0000</div>
<div class="t" style="left:1087px;top:867.1px;font-size:10.8px;color:#000;">286.2000</div>
<div class="t" style="left:1226.3px;top:867.1px;font-size:10.8px;color:#000;">Finition int - Enduit plâtre</div>
<div class="t" style="left:1475.3px;top:867.1px;font-size:10.8px;color:#000;">– – –</div>
<div class="t" style="left:1578.9px;top:867.1px;font-size:10.8px;color:#000;">100</div>
<div class="t" style="left:1637.5px;top:867.1px;font-size:10.8px;color:#000;">m3</div>
<div class="t" style="left:1712.9px;top:867.1px;font-size:10.8px;color:#000;">dynamique</div>
<svg style="left:1178px;top:865px" width="28" height="14"><path d="M1.5 6.5h11l-5.5-5.5z" fill="none" stroke="#3f5a7e" stroke-width="1"/><path d="M14.5 6.5h11l-5.5 5.5z" fill="none" stroke="#3f5a7e" stroke-width="1"/></svg>
<svg style="left:1808px;top:866px" width="12" height="12"><rect x="0.5" y="0.5" width="10" height="10" fill="#fff" stroke="#7b828b" stroke-width="1.2"/><path d="M3 5l2 2 3-4" stroke="#9aa" fill="none"/></svg>
<div class="t" style="left:930.7px;top:881.1px;font-size:10.8px;color:#000;">2</div>
<div class="t" style="left:1012.3px;top:881.1px;font-size:10.8px;color:#000;">18.0000</div>
<div class="t" style="left:1087px;top:881.1px;font-size:10.8px;color:#000;">286.2000</div>
<div class="t" style="left:1226.3px;top:881.1px;font-size:10.8px;color:#000;">Struct. - Parpaing béton</div>
<div class="t" style="left:1402.4px;top:881.1px;font-size:10.8px;color:#000;">Systèmes d'isolation thermique</div>
<div class="t" style="left:1578.9px;top:881.1px;font-size:10.8px;color:#000;">100</div>
<div class="t" style="left:1637.5px;top:881.1px;font-size:10.8px;color:#000;">m2</div>
<div class="t" style="left:1712.9px;top:881.1px;font-size:10.8px;color:#000;">dynamique</div>
<svg style="left:1178px;top:879px" width="28" height="14"><path d="M1.5 6.5h11l-5.5-5.5z" fill="none" stroke="#3f5a7e" stroke-width="1"/><path d="M14.5 6.5h11l-5.5 5.5z" fill="none" stroke="#3f5a7e" stroke-width="1"/></svg>
<svg style="left:1808px;top:880px" width="12" height="12"><rect x="0.5" y="0.5" width="10" height="10" fill="#fff" stroke="#7b828b" stroke-width="1.2"/><path d="M3 5l2 2 3-4" stroke="#9aa" fill="none"/></svg>
<div class="t" style="left:930.7px;top:895.1px;font-size:10.8px;color:#000;">3</div>
<div class="t" style="left:1012.3px;top:895.1px;font-size:10.8px;color:#000;">1.0000</div>
<div class="t" style="left:1087px;top:895.1px;font-size:10.8px;color:#000;">286.2000</div>
<div class="t" style="left:1226.3px;top:895.1px;font-size:10.8px;color:#000;">Finition int - Enduit plâtre</div>
<div class="t" style="left:1475.3px;top:895.1px;font-size:10.8px;color:#000;">– – –</div>
<div class="t" style="left:1578.9px;top:895.1px;font-size:10.8px;color:#000;">100</div>
<div class="t" style="left:1637.5px;top:895.1px;font-size:10.8px;color:#000;">m2</div>
<div class="t" style="left:1712.9px;top:895.1px;font-size:10.8px;color:#000;">dynamique</div>
<svg style="left:1178px;top:893px" width="28" height="14"><path d="M1.5 6.5h11l-5.5-5.5z" fill="none" stroke="#3f5a7e" stroke-width="1"/><path d="M14.5 6.5h11l-5.5 5.5z" fill="none" stroke="#3f5a7e" stroke-width="1"/></svg>
<svg style="left:1808px;top:894px" width="12" height="12"><rect x="0.5" y="0.5" width="10" height="10" fill="#fff" stroke="#7b828b" stroke-width="1.2"/><path d="M3 5l2 2 3-4" stroke="#9aa" fill="none"/></svg>
<div class="a" style="left:944px;top:941px;width:802px;height:10px;background:#fff;border:1px solid #b5bfcb;border-radius:3px"></div>
<svg style="left:1340px;top:943px" width="9" height="6"><path d="M1 0v6 M3 0v6 M5 0v6 M7 0v6" stroke="#9aa5b3"/></svg>
<svg style="left:933px;top:943px" width="6" height="8"><path d="M5 0v8L0 4z" fill="#b7c3d3"/></svg>
<svg style="left:1837px;top:943px" width="6" height="8"><path d="M0 0v8l5-4z" fill="#b7c3d3"/></svg>
<svg style="left:930px;top:967px" width="16" height="16"><path d="M1 1h14" stroke="#b1b4b8" stroke-width="1.6"/><path d="M8 15V5 M4 9l4-4 4 4" stroke="#b1b4b8" stroke-width="2.2" fill="none"/></svg>
<svg style="left:955px;top:967px" width="16" height="16"><path d="M1 15h14" stroke="#b1b4b8" stroke-width="1.6"/><path d="M8 1v10 M4 7l4 4 4-4" stroke="#b1b4b8" stroke-width="2.2" fill="none"/></svg>
<svg style="left:981px;top:967px" width="16" height="16"><path d="M8 15V5 M4 9l4-4 4 4" stroke="#b1b4b8" stroke-width="2.2" fill="none"/></svg>
<svg style="left:1006px;top:967px" width="16" height="16"><path d="M8 1v10 M4 7l4 4 4-4" stroke="#b1b4b8" stroke-width="2.2" fill="none"/></svg>
<svg style="left:1051px;top:967px" width="16" height="16"><path d="M1 7h5 M10 7h5 M1 11h14 M1 14h5 M10 14h5" stroke="#2f4e78" stroke-width="1.6"/><path d="M12 2C7 2 6 9 9 15" stroke="#b0202a" stroke-width="1.5" fill="none"/><path d="M10 1l3 1-2 2" stroke="#b0202a" fill="none"/></svg>
<svg style="left:1077px;top:967px" width="16" height="16"><path d="M1 7h14 M1 11h14 M8 2v13" stroke="#b1b4b8" stroke-width="2.2"/></svg>
<svg style="left:1102px;top:967px" width="16" height="16"><path d="M1 5h14 M1 11h14 M8 2v13" stroke="#b1b4b8" stroke-width="2.2"/></svg>
<svg style="left:1128px;top:967px" width="16" height="16"><path d="M2 2l12 12 M14 2L2 14 M1 8h14" stroke="#b1b4b8" stroke-width="2.6"/></svg>
<svg style="left:1153px;top:967px" width="16" height="16"><path d="M1 15h14" stroke="#b1b4b8" stroke-width="1.3"/><path d="M3 12l8-8 2 2-8 8z" fill="#b1b4b8"/></svg>
<div class="t" style="left:1194.5px;top:969.9px;font-size:10.8px;color:#000;">Bibliothèque</div>
<div class="t" style="left:1194.5px;top:982.3px;font-size:10.8px;color:#000;">assignée</div>
<div class="a" style="left:1300px;top:964px;width:75px;height:22px;background:linear-gradient(#f3f6fa,#dbe4ef 50%,#cbd8e8);border:1px solid #8a9bb1;border-radius:3px"></div>
<div class="t" style="left:1300px;top:970.0px;width:75px;text-align:center;font-size:10.8px;color:#000">Allplan_BCM</div>
<div class="t" style="left:1431.4px;top:968.7px;font-size:10.8px;color:#000;">Mur entier</div>
<div class="a" style="left:1495px;top:964px;width:75px;height:22px;background:linear-gradient(#f3f6fa,#dbe4ef 50%,#cbd8e8);border:1px solid #8a9bb1;border-radius:3px"></div>
<div class="t" style="left:1495px;top:970.0px;width:75px;text-align:center;font-size:10.8px;color:#000">Attributs...</div>
<div class="a" style="left:1563px;top:1007px;width:134px;height:21px;background:linear-gradient(#f3f6fa,#dbe4ef 50%,#cbd8e8);border:1px solid #8a9bb1;border-radius:3px"></div>
<div class="t" style="left:1563px;top:1012.5px;width:134px;text-align:center;font-size:10.8px;color:#000">Réduire &lt;&lt;</div>
<div class="a" style="left:1704px;top:1007px;width:75px;height:21px;background:linear-gradient(#f3f6fa,#dbe4ef 50%,#cbd8e8);border:1px solid #8a9bb1;border-radius:3px"></div>
<div class="t" style="left:1704px;top:1012.5px;width:75px;text-align:center;font-size:10.8px;color:#000">OK</div>
<div class="a" style="left:1787px;top:1007px;width:75px;height:21px;background:linear-gradient(#f3f6fa,#dbe4ef 50%,#cbd8e8);border:1px solid #8a9bb1;border-radius:3px"></div>
<div class="t" style="left:1787px;top:1012.5px;width:75px;text-align:center;font-size:10.8px;color:#000">Annuler</div>
<svg style="left:1860px;top:1022px" width="8" height="8"><path d="M6 1h1 M6 4h1 M3 4h1 M6 7h1 M3 7h1 M0 7h1" stroke="#9aa7b8"/></svg>
<svg style="left:917px;top:1007px" width="17" height="17"><path d="M2 15l8-8 M8 5l4 4" stroke="#3a4a5c" stroke-width="1.6"/><circle cx="13" cy="4" r="2.6" fill="#3a4a5c"/><path d="M2 15l2-1" stroke="#3a4a5c" stroke-width="2"/></svg>
<svg style="left:947px;top:1007px" width="17" height="17"><path d="M1 8h5l1 1h8l-2 7H1z" fill="#e6e2d8" stroke="#5b5f66"/><path d="M11 1l1.3 2.7 3 .4-2.2 2 .6 3-2.7-1.5-2.7 1.5.6-3-2.2-2 3-.4z" fill="#4d78b3"/></svg>
<svg style="left:977px;top:1007px" width="17" height="17"><rect x="1.5" y="6.5" width="9" height="9" fill="#8c96a3" stroke="#4a5260"/><rect x="3" y="7" width="6" height="3" fill="#eee"/><path d="M12 1l1.3 2.7 3 .4-2.2 2 .6 3-2.7-1.5-2.7 1.5.6-3-2.2-2 3-.4z" fill="#4d78b3"/></svg>
<div class="a" style="left:1003px;top:1007px;width:161px;height:21px;background:#fff;border:1px solid #b7c2cf"></div>
<div class="a" style="left:1146px;top:1008px;width:17px;height:19px;background:linear-gradient(#eef2f7,#d0dae6);border-left:1px solid #c5cfdb"></div>
<svg style="left:1151px;top:1016px" width="8" height="5"><path d="M0 0h7l-3.5 4z" fill="#111"/></svg>
</body></html>
